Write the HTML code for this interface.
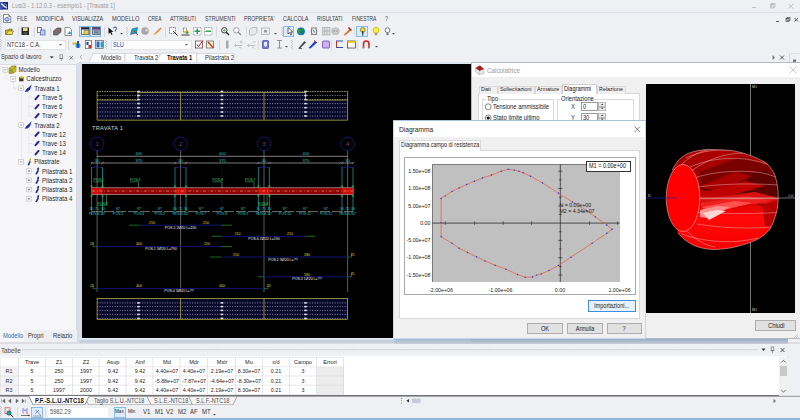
<!DOCTYPE html>
<html><head><meta charset="utf-8">
<style>
*{box-sizing:border-box;margin:0;padding:0}
html,body{width:800px;height:420px;overflow:hidden}
body{position:relative;background:#eff0f3;font-family:"Liberation Sans",sans-serif;font-size:5.8px;color:#1e1e1e}
.a{position:absolute}
.t{position:absolute;white-space:pre;line-height:1}
svg{position:absolute;overflow:visible}
</style></head><body>
<svg style="left:0;top:1.5px" width="9" height="9"><rect x="0" y="0" width="8" height="7.5" fill="#1c2480"/><rect x="0" y="0" width="3" height="7.5" fill="#4050b0"/><path d="M1.2 1.5 L6.8 6.2" stroke="#e8ecff" stroke-width="1.3"/><circle cx="4.8" cy="3.6" r="1.8" fill="none" stroke="#c8d0ff" stroke-width="0.6"/></svg>
<div class="t" style="left:12.00px;transform-origin:0 0;transform:scaleX(0.870);top:2.78px;font-size:6.67px;color:#9c9c9c;">Lusi3 - 1.12.0.3 - esempio1 - [Travata 1]</div>
<svg style="left:748px;top:2px" width="52" height="9"><path d="M4 5.5 H8" stroke="#aaa" stroke-width="0.7"/><rect x="22.5" y="2.5" width="3.5" height="3.5" fill="none" stroke="#aaa" stroke-width="0.6"/><rect x="23.5" y="1.5" width="3.5" height="3.5" fill="none" stroke="#aaa" stroke-width="0.6"/><path d="M40.5 2 L45 6.5 M45 2 L40.5 6.5" stroke="#aaa" stroke-width="0.7"/></svg>
<div class="a" style="left:0px;top:12px;width:800px;height:1px;background:#dedde5;"></div>
<svg style="left:3px;top:14px" width="9" height="10"><path d="M0.5 0.5 H5.5 L7.8 2.8 V8.5 H0.5Z" fill="#fafafa" stroke="#444" stroke-width="0.6"/><path d="M5.5 0.5 V2.8 H7.8" fill="#666"/><ellipse cx="4" cy="5.3" rx="2.6" ry="1.4" fill="none" stroke="#3a50d0" stroke-width="0.6"/><ellipse cx="4" cy="5.3" rx="1.2" ry="2.3" fill="none" stroke="#3a50d0" stroke-width="0.6"/></svg>
<svg style="left:0px;top:13.5px" width="3" height="11"><rect x="0.0" y="0.0" width="0.8" height="0.8" fill="#a8a8b4"/><rect x="1.2" y="1.2" width="0.8" height="0.8" fill="#a8a8b4"/><rect x="0.0" y="2.4" width="0.8" height="0.8" fill="#a8a8b4"/><rect x="1.2" y="3.5999999999999996" width="0.8" height="0.8" fill="#a8a8b4"/><rect x="0.0" y="4.8" width="0.8" height="0.8" fill="#a8a8b4"/><rect x="1.2" y="6.0" width="0.8" height="0.8" fill="#a8a8b4"/><rect x="0.0" y="7.199999999999999" width="0.8" height="0.8" fill="#a8a8b4"/><rect x="1.2" y="8.4" width="0.8" height="0.8" fill="#a8a8b4"/><rect x="0.0" y="9.6" width="0.8" height="0.8" fill="#a8a8b4"/></svg>
<div class="t" style="left:17.2px;top:15.6px;font-size:6.6px;color:#3a3a3a;transform-origin:0 0;transform:scaleX(0.732)">FILE</div>
<div class="t" style="left:36px;top:15.6px;font-size:6.6px;color:#3a3a3a;transform-origin:0 0;transform:scaleX(0.859)">MODIFICA</div>
<div class="t" style="left:72.4px;top:15.6px;font-size:6.6px;color:#3a3a3a;transform-origin:0 0;transform:scaleX(0.826)">VISUALIZZA</div>
<div class="t" style="left:112.2px;top:15.6px;font-size:6.6px;color:#3a3a3a;transform-origin:0 0;transform:scaleX(0.847)">MODELLO</div>
<div class="t" style="left:148.3px;top:15.6px;font-size:6.6px;color:#3a3a3a;transform-origin:0 0;transform:scaleX(0.736)">CREA</div>
<div class="t" style="left:170.2px;top:15.6px;font-size:6.6px;color:#3a3a3a;transform-origin:0 0;transform:scaleX(0.768)">ATTRIBUTI</div>
<div class="t" style="left:205.4px;top:15.6px;font-size:6.6px;color:#3a3a3a;transform-origin:0 0;transform:scaleX(0.795)">STRUMENTI</div>
<div class="t" style="left:243.8px;top:15.6px;font-size:6.6px;color:#3a3a3a;transform-origin:0 0;transform:scaleX(0.784)">PROPRIETA'</div>
<div class="t" style="left:282.8px;top:15.6px;font-size:6.6px;color:#3a3a3a;transform-origin:0 0;transform:scaleX(0.828)">CALCOLA</div>
<div class="t" style="left:316.8px;top:15.6px;font-size:6.6px;color:#3a3a3a;transform-origin:0 0;transform:scaleX(0.791)">RISULTATI</div>
<div class="t" style="left:352px;top:15.6px;font-size:6.6px;color:#3a3a3a;transform-origin:0 0;transform:scaleX(0.748)">FINESTRA</div>
<div class="t" style="left:385px;top:15.6px;font-size:6.6px;color:#3a3a3a;transform-origin:0 0;transform:scaleX(0.817)">?</div>
<svg style="left:774px;top:16px" width="26" height="8"><path d="M2 5.5 H5" stroke="#333" stroke-width="0.8"/><rect x="12" y="2.5" width="3" height="3" fill="none" stroke="#333" stroke-width="0.6"/><rect x="13" y="1.5" width="3" height="3" fill="none" stroke="#333" stroke-width="0.6"/><path d="M20.5 2 L24 5.5 M24 2 L20.5 5.5" stroke="#333" stroke-width="0.8"/></svg>
<svg style="left:0px;top:26px" width="3" height="11"><rect x="0.0" y="0.0" width="0.8" height="0.8" fill="#a8a8b4"/><rect x="1.2" y="1.2" width="0.8" height="0.8" fill="#a8a8b4"/><rect x="0.0" y="2.4" width="0.8" height="0.8" fill="#a8a8b4"/><rect x="1.2" y="3.5999999999999996" width="0.8" height="0.8" fill="#a8a8b4"/><rect x="0.0" y="4.8" width="0.8" height="0.8" fill="#a8a8b4"/><rect x="1.2" y="6.0" width="0.8" height="0.8" fill="#a8a8b4"/><rect x="0.0" y="7.199999999999999" width="0.8" height="0.8" fill="#a8a8b4"/><rect x="1.2" y="8.4" width="0.8" height="0.8" fill="#a8a8b4"/><rect x="0.0" y="9.6" width="0.8" height="0.8" fill="#a8a8b4"/></svg>
<svg style="left:0px;top:39px" width="3" height="11"><rect x="0.0" y="0.0" width="0.8" height="0.8" fill="#a8a8b4"/><rect x="1.2" y="1.2" width="0.8" height="0.8" fill="#a8a8b4"/><rect x="0.0" y="2.4" width="0.8" height="0.8" fill="#a8a8b4"/><rect x="1.2" y="3.5999999999999996" width="0.8" height="0.8" fill="#a8a8b4"/><rect x="0.0" y="4.8" width="0.8" height="0.8" fill="#a8a8b4"/><rect x="1.2" y="6.0" width="0.8" height="0.8" fill="#a8a8b4"/><rect x="0.0" y="7.199999999999999" width="0.8" height="0.8" fill="#a8a8b4"/><rect x="1.2" y="8.4" width="0.8" height="0.8" fill="#a8a8b4"/><rect x="0.0" y="9.6" width="0.8" height="0.8" fill="#a8a8b4"/></svg>
<svg style="left:5px;top:26.5px" width="10" height="10"><path d="M0.5 3 H3 L4 2 H7 V7.5 H0.5Z" fill="#c8b830" stroke="#5a5010" stroke-width="0.6"/><path d="M1.5 7.5 L3 4 H8.5 L7 7.5Z" fill="#f0e060" stroke="#5a5010" stroke-width="0.5"/></svg>
<svg style="left:21px;top:26.5px" width="10" height="10"><rect x="0.5" y="0.5" width="7.5" height="7.5" fill="#2a2a1a"/><rect x="2" y="1" width="4.5" height="3" fill="#e8e090"/><rect x="2.5" y="5.3" width="3.5" height="2.2" fill="#555"/></svg>
<svg style="left:37px;top:26.5px" width="10" height="10"><rect x="0.5" y="0.5" width="4" height="5" fill="#fff" stroke="#333" stroke-width="0.6"/><rect x="3.5" y="3" width="4.5" height="5" fill="#c0c8f0" stroke="#4050a0" stroke-width="0.6"/></svg>
<svg style="left:53px;top:26.5px" width="10" height="10"><path d="M0.5 4 L4 1 H8 V5 L4.5 8 H0.5Z" fill="#707070" stroke="#333" stroke-width="0.5"/><circle cx="4.5" cy="4.5" r="1" fill="#d04040"/></svg>
<svg style="left:64px;top:26.5px" width="10" height="10"><path d="M1 0.5 H5.5 L7.5 2.5 V8.5 H1Z" fill="#fff" stroke="#444" stroke-width="0.6"/><path d="M3 7 L6 4 L7.5 7Z" fill="#3aa0c0"/></svg>
<svg style="left:108px;top:26.5px" width="10" height="10"><path d="M0.5 0.5 L0.5 7 L2.2 5.4 L3.5 8 L4.5 7.5 L3.3 5 H5.5Z" fill="#111"/><path d="M5.5 1.5 Q5.5 0 7 0 Q8.6 0 8.6 1.5 Q8.6 2.6 7.2 3.3 V4.5" fill="none" stroke="#1a2a8a" stroke-width="0.9"/></svg>
<svg style="left:130px;top:26.5px" width="10" height="10"><path d="M0.5 7.5 L2 2 L7.5 0.5 L6.5 6Z" fill="#20a0c0" stroke="#105070" stroke-width="0.5"/><path d="M4 4 L8 8" stroke="#c03020" stroke-width="0.9"/></svg>
<svg style="left:141px;top:26.5px" width="10" height="10"><circle cx="4" cy="4" r="3.8" fill="#a8a8a8"/><circle cx="5.5" cy="3" r="1.5" fill="#d0d0d0"/></svg>
<svg style="left:153px;top:26.5px" width="10" height="10"><path d="M0.5 8 L2 6 L7.5 0.5 L8.5 1.5 L3 7Z" fill="#e08020"/><path d="M0.5 8 L2 6 L3 7Z" fill="#ffd040"/></svg>
<svg style="left:169px;top:26.5px" width="10" height="10"><rect x="0.5" y="0.5" width="6" height="6" fill="#fff" stroke="#222" stroke-width="0.6" stroke-dasharray="1 0.7"/><path d="M4 4 L8.5 8.5" stroke="#222" stroke-width="0.9"/></svg>
<svg style="left:181px;top:26.5px" width="10" height="10"><path d="M0.5 8 H8.5" stroke="#111" stroke-width="0.8"/><rect x="2.5" y="1" width="3" height="4" fill="#fff" stroke="#333" stroke-width="0.4"/><circle cx="5.5" cy="5" r="2" fill="#f0c020"/><circle cx="6.2" cy="5.5" r="1.2" fill="#30a040"/></svg>
<svg style="left:193px;top:26.5px" width="10" height="10"><rect x="0.5" y="0.5" width="7.5" height="7.5" fill="#fff" stroke="#555" stroke-width="0.5" stroke-dasharray="1 0.6"/><path d="M1.5 4.2 H7 M4.2 1.5 V7" stroke="#20a040" stroke-width="1.4"/></svg>
<svg style="left:204px;top:26.5px" width="10" height="10"><rect x="0.5" y="0.5" width="7.5" height="7.5" fill="#fff" stroke="#555" stroke-width="0.5" stroke-dasharray="1 0.6"/><path d="M1.5 4.2 H7" stroke="#20a040" stroke-width="1.4"/></svg>
<svg style="left:221px;top:26.5px" width="10" height="10"><circle cx="3.3" cy="3.3" r="2.7" fill="#fff" stroke="#222" stroke-width="0.9"/><path d="M5.2 5.2 L8 8" stroke="#222" stroke-width="1.3"/><path d="M2 3.3 H4.6 M3.3 2 V4.6" stroke="#1a8a30" stroke-width="0.6"/></svg>
<svg style="left:233px;top:26.5px" width="10" height="10"><circle cx="3.3" cy="3.3" r="2.7" fill="#fff" stroke="#888" stroke-width="0.8"/><path d="M5.2 5.2 L8 8" stroke="#888" stroke-width="1.1"/></svg>
<svg style="left:249px;top:26.5px" width="10" height="10"><path d="M0.5 3 L3 0.5 H8 V5.5 L5.5 8 H0.5Z" fill="#e8e8e8" stroke="#999" stroke-width="0.6"/></svg>
<svg style="left:261px;top:26.5px" width="10" height="10"><rect x="0.5" y="1" width="8" height="6.5" fill="#eee" stroke="#999" stroke-width="0.6"/><rect x="3" y="3" width="3" height="2.5" fill="#999"/></svg>
<svg style="left:285px;top:26.5px" width="10" height="10"><path d="M2 0.5 L2 7 L3.6 5.5 L4.8 8 L5.8 7.5 L4.6 5 H6.8Z" fill="#fff" stroke="#111" stroke-width="0.6"/></svg>
<svg style="left:297px;top:26.5px" width="10" height="10"><circle cx="4" cy="4.3" r="3.9" fill="#1a6ac0"/><path d="M1 2.5 Q3 1 4 3 Q3 6 5.5 7.5 Q2 8 1 5Z M5 1 Q7.5 2 7.5 4 Q6 4.5 5 3Z" fill="#20a030"/></svg>
<svg style="left:310px;top:26.5px" width="10" height="10"><path d="M1 1 H7 M1 7.5 H7" stroke="#666" stroke-width="0.8"/><path d="M2 1.5 Q0.5 4 2 7 M6 1.5 Q7.5 4 6 7" fill="none" stroke="#444" stroke-width="0.8"/><path d="M3.5 3 L4.5 5.5" stroke="#2a2a80" stroke-width="0.8"/></svg>
<svg style="left:322px;top:26.5px" width="10" height="10"><rect x="0.5" y="0.5" width="7.5" height="7.5" fill="#ddd" stroke="#999" stroke-width="0.5"/><path d="M2.5 0.5 V8 M5 0.5 V8 M0.5 4 H8" stroke="#999" stroke-width="0.5"/></svg>
<svg style="left:331px;top:26.5px" width="10" height="10"><ellipse cx="4.5" cy="4.2" rx="4" ry="3.5" fill="#ccc" stroke="#aaa" stroke-width="0.5"/><circle cx="3" cy="4" r="0.8" fill="#888"/><circle cx="6" cy="4" r="0.8" fill="#888"/></svg>
<svg style="left:343px;top:26.5px" width="10" height="10"><path d="M0.5 8 L6.5 2 L8 3.5 L2 8.5Z" fill="#e07020"/><path d="M5.5 0.5 L8.5 3.5" stroke="#c02020" stroke-width="1.5"/></svg>
<svg style="left:358px;top:26.5px" width="10" height="10"><circle cx="4.8" cy="3" r="2.4" fill="#f8e030" stroke="#333" stroke-width="0.5"/><path d="M4.8 4 V8.5" stroke="#222" stroke-width="1.1"/></svg>
<svg style="left:372px;top:26.5px" width="10" height="10"><circle cx="4" cy="3.2" r="3" fill="#f8f040" stroke="#a09000" stroke-width="0.5"/><rect x="2.8" y="6" width="2.4" height="2.2" fill="#999"/></svg>
<svg style="left:384px;top:26.5px" width="10" height="10"><circle cx="3.5" cy="3.2" r="2.4" fill="#fff" stroke="#444" stroke-width="0.7"/><rect x="2.5" y="5.6" width="2" height="2.5" fill="#777"/></svg>
<div class="a" style="left:79px;top:25.5px;width:11px;height:11.5px;background:#dcecfa;border:0.8px solid #88bde8"></div>
<div class="a" style="left:90px;top:25.5px;width:11px;height:11.5px;background:#dcecfa;border:0.8px solid #88bde8"></div>
<div class="a" style="left:283px;top:25.5px;width:11px;height:11.5px;background:#dcecfa;border:0.8px solid #88bde8"></div>
<div class="a" style="left:356px;top:25.5px;width:12px;height:11.5px;background:#dcecfa;border:0.8px solid #88bde8"></div>
<svg style="left:81px;top:27.0px" width="10" height="10"><rect x="0.5" y="0.5" width="7.5" height="7" fill="#fff" stroke="#223" stroke-width="0.6"/><rect x="0.5" y="0.5" width="7.5" height="2" fill="#223"/><rect x="3" y="3.5" width="4.5" height="4" fill="#e8d040" stroke="#333" stroke-width="0.4"/></svg>
<svg style="left:92px;top:27.0px" width="10" height="10"><rect x="0.5" y="0.5" width="7.5" height="7" fill="#b0b4d8" stroke="#334" stroke-width="0.6"/><rect x="0.5" y="0.5" width="7.5" height="2" fill="#5a3a6a"/><path d="M2 4 H6.5 M2 5.8 H6.5" stroke="#222" stroke-width="0.6"/></svg>
<svg style="left:286px;top:26.7px" width="10" height="10"><path d="M2 0.5 L2 7 L3.6 5.5 L4.8 8 L5.8 7.5 L4.6 5 H6.8Z" fill="#fff" stroke="#111" stroke-width="0.6"/></svg>
<svg style="left:358px;top:26.7px" width="10" height="10"><circle cx="4.8" cy="3" r="2.4" fill="#f8e030" stroke="#333" stroke-width="0.5"/><path d="M4.8 4 V8.5" stroke="#222" stroke-width="1.1"/></svg>
<div class="a" style="left:17.5px;top:26.5px;width:1px;height:10px;background:#d8d8de;"></div>
<div class="a" style="left:33.5px;top:26.5px;width:1px;height:10px;background:#d8d8de;"></div>
<div class="a" style="left:49.5px;top:26.5px;width:1px;height:10px;background:#d8d8de;"></div>
<div class="a" style="left:104px;top:26.5px;width:1px;height:10px;background:#d8d8de;"></div>
<div class="a" style="left:165px;top:26.5px;width:1px;height:10px;background:#d8d8de;"></div>
<div class="a" style="left:216px;top:26.5px;width:1px;height:10px;background:#d8d8de;"></div>
<div class="a" style="left:246px;top:26.5px;width:1px;height:10px;background:#d8d8de;"></div>
<div class="a" style="left:354px;top:26.5px;width:1px;height:10px;background:#d8d8de;"></div>
<svg style="left:126px;top:27px" width="3" height="10"><rect x="0.0" y="0.0" width="0.8" height="0.8" fill="#a8a8b4"/><rect x="1.2" y="1.2" width="0.8" height="0.8" fill="#a8a8b4"/><rect x="0.0" y="2.4" width="0.8" height="0.8" fill="#a8a8b4"/><rect x="1.2" y="3.5999999999999996" width="0.8" height="0.8" fill="#a8a8b4"/><rect x="0.0" y="4.8" width="0.8" height="0.8" fill="#a8a8b4"/><rect x="1.2" y="6.0" width="0.8" height="0.8" fill="#a8a8b4"/><rect x="0.0" y="7.199999999999999" width="0.8" height="0.8" fill="#a8a8b4"/><rect x="1.2" y="8.4" width="0.8" height="0.8" fill="#a8a8b4"/></svg>
<svg style="left:281px;top:27px" width="3" height="10"><rect x="0.0" y="0.0" width="0.8" height="0.8" fill="#a8a8b4"/><rect x="1.2" y="1.2" width="0.8" height="0.8" fill="#a8a8b4"/><rect x="0.0" y="2.4" width="0.8" height="0.8" fill="#a8a8b4"/><rect x="1.2" y="3.5999999999999996" width="0.8" height="0.8" fill="#a8a8b4"/><rect x="0.0" y="4.8" width="0.8" height="0.8" fill="#a8a8b4"/><rect x="1.2" y="6.0" width="0.8" height="0.8" fill="#a8a8b4"/><rect x="0.0" y="7.199999999999999" width="0.8" height="0.8" fill="#a8a8b4"/><rect x="1.2" y="8.4" width="0.8" height="0.8" fill="#a8a8b4"/></svg>
<svg style="left:120px;top:33px" width="4" height="3"><path d="M0 0 H3 L1.5 1.5Z" fill="#444"/></svg>
<svg style="left:274px;top:33px" width="4" height="3"><path d="M0 0 H3 L1.5 1.5Z" fill="#444"/></svg>
<svg style="left:392px;top:33px" width="4" height="3"><path d="M0 0 H3 L1.5 1.5Z" fill="#444"/></svg>
<div class="a" style="left:4.5px;top:39.5px;width:61px;height:10px;background:#fcfcfd;border:0.5px solid #e2e2e8"></div>
<div class="t" style="left:6.50px;transform-origin:0 0;transform:scaleX(0.870);top:41.80px;font-size:6.44px;color:#333;">NTC18 - C.A.</div>
<svg style="left:59px;top:43.5px" width="4" height="3"><path d="M0 0 H3 L1.5 1.5Z" fill="#555"/></svg>
<div class="a" style="left:110.5px;top:39.5px;width:81.5px;height:10px;background:#fcfcfd;border:0.5px solid #e2e2e8"></div>
<div class="t" style="left:113.00px;transform-origin:0 0;transform:scaleX(0.870);top:41.80px;font-size:6.44px;color:#3040b0;">SLU</div>
<svg style="left:185px;top:43.5px" width="4" height="3"><path d="M0 0 H3 L1.5 1.5Z" fill="#555"/></svg>
<svg style="left:72px;top:40.0px" width="10" height="10"><rect x="0.5" y="2.5" width="5" height="2" fill="#d0c020"/><circle cx="6" cy="5.5" r="2.5" fill="#20a0e0"/><rect x="5" y="1" width="2" height="7" fill="#3050c0"/></svg>
<svg style="left:85px;top:40.0px" width="10" height="10"><rect x="0.5" y="0.5" width="6" height="8" fill="#fff" stroke="#444" stroke-width="0.6"/><rect x="1.5" y="2" width="2" height="3" fill="#2040c0"/><rect x="3.5" y="5" width="2.5" height="3" fill="#c03030"/></svg>
<svg style="left:95px;top:40.0px" width="10" height="10"><rect x="0.5" y="0.5" width="8" height="8" fill="#fff" stroke="#444" stroke-width="0.6"/><rect x="1.5" y="1.5" width="3" height="6" fill="#3060c0"/><rect x="5.5" y="1.5" width="2.5" height="6" fill="#30a0b0"/></svg>
<svg style="left:195px;top:40.0px" width="10" height="10"><rect x="0.5" y="1" width="7" height="7" fill="#fff" stroke="#633" stroke-width="0.7"/><path d="M2 4.5 L3.5 6.5 L8 0.5" fill="none" stroke="#d02020" stroke-width="1"/></svg>
<svg style="left:206px;top:40.0px" width="10" height="10"><rect x="0.5" y="1" width="7" height="7" fill="#f8f0d0" stroke="#444" stroke-width="0.6"/><path d="M2 2 L7.5 8" stroke="#c03010" stroke-width="1.2"/></svg>
<svg style="left:225px;top:40.0px" width="10" height="10"><rect x="1" y="0.5" width="2.5" height="8" fill="#aaa"/></svg>
<svg style="left:234px;top:40.0px" width="10" height="10"><path d="M0.5 5.5 H8.5 M2 4 L0.5 5.5 L2 7 M5 7 Q7 7.5 7.5 8.5" fill="none" stroke="#aaa" stroke-width="0.7"/><path d="M5.5 2 H8.5 M7 0.5 V3.5" stroke="#aaa" stroke-width="0.6"/></svg>
<svg style="left:247px;top:40.0px" width="10" height="10"><path d="M0.5 5.5 H8.5 M2 4 L0.5 5.5 L2 7 M5 7 Q7 7.5 7.5 8.5" fill="none" stroke="#aaa" stroke-width="0.7"/><path d="M5.5 2 H8.5" stroke="#aaa" stroke-width="0.6"/></svg>
<svg style="left:262px;top:40.0px" width="10" height="10"><rect x="0.5" y="0.5" width="6" height="8" rx="0.8" fill="#7078d8" stroke="#303890" stroke-width="0.6"/><path d="M2 2 H5 V5.5 L3.5 7 L2 5.5Z" fill="#e8ecff"/></svg>
<svg style="left:276px;top:40.0px" width="10" height="10"><path d="M1 0.5 H6 M3.5 0.5 V8 M1 8 H6" stroke="#888" stroke-width="0.9"/></svg>
<svg style="left:298px;top:40.0px" width="10" height="10"><path d="M0.5 8 L6.5 1 L8 2.5 L2 8.5Z" fill="#4a4a4a"/><path d="M0.5 8.5 H4" stroke="#333" stroke-width="0.7"/></svg>
<svg style="left:308px;top:40.0px" width="10" height="10"><path d="M0.5 8 L7 1 L9 2.5 L2.5 8.5Z" fill="#2040d0"/><path d="M6 0.5 L9 3" stroke="#a02020" stroke-width="1"/></svg>
<svg style="left:322px;top:40.0px" width="10" height="10"><rect x="0.5" y="1" width="7" height="7" rx="1" fill="#d0b0f0" stroke="#6030a0" stroke-width="0.7"/></svg>
<svg style="left:335px;top:40.0px" width="10" height="10"><path d="M1 1 H8 M1 7.5 H8" stroke="#2050c0" stroke-width="1"/><path d="M1.5 1 V7.5" stroke="#d03020" stroke-width="1"/></svg>
<svg style="left:347px;top:40.0px" width="10" height="10"><rect x="0.5" y="1" width="8" height="7" fill="#fff" stroke="#333" stroke-width="0.7"/><rect x="0.5" y="1" width="8" height="2" fill="#e8c820"/></svg>
<svg style="left:362px;top:40.0px" width="10" height="10"><path d="M1.5 8 V4 Q1.5 1 4.2 1 Q7 1 7 4 V8" fill="none" stroke="#d82020" stroke-width="1.6"/><path d="M1.5 6.5 V8.5 M7 6.5 V8.5" stroke="#888" stroke-width="1.6"/></svg>
<div class="a" style="left:68px;top:39.5px;width:1px;height:10px;background:#d8d8de;"></div>
<div class="a" style="left:219px;top:39.5px;width:1px;height:10px;background:#d8d8de;"></div>
<div class="a" style="left:258px;top:39.5px;width:1px;height:10px;background:#d8d8de;"></div>
<div class="a" style="left:331px;top:39.5px;width:1px;height:10px;background:#d8d8de;"></div>
<div class="a" style="left:357px;top:39.5px;width:1px;height:10px;background:#d8d8de;"></div>
<svg style="left:105px;top:40px" width="3" height="10"><rect x="0.0" y="0.0" width="0.8" height="0.8" fill="#a8a8b4"/><rect x="1.2" y="1.2" width="0.8" height="0.8" fill="#a8a8b4"/><rect x="0.0" y="2.4" width="0.8" height="0.8" fill="#a8a8b4"/><rect x="1.2" y="3.5999999999999996" width="0.8" height="0.8" fill="#a8a8b4"/><rect x="0.0" y="4.8" width="0.8" height="0.8" fill="#a8a8b4"/><rect x="1.2" y="6.0" width="0.8" height="0.8" fill="#a8a8b4"/><rect x="0.0" y="7.199999999999999" width="0.8" height="0.8" fill="#a8a8b4"/><rect x="1.2" y="8.4" width="0.8" height="0.8" fill="#a8a8b4"/></svg>
<svg style="left:291px;top:40px" width="3" height="10"><rect x="0.0" y="0.0" width="0.8" height="0.8" fill="#a8a8b4"/><rect x="1.2" y="1.2" width="0.8" height="0.8" fill="#a8a8b4"/><rect x="0.0" y="2.4" width="0.8" height="0.8" fill="#a8a8b4"/><rect x="1.2" y="3.5999999999999996" width="0.8" height="0.8" fill="#a8a8b4"/><rect x="0.0" y="4.8" width="0.8" height="0.8" fill="#a8a8b4"/><rect x="1.2" y="6.0" width="0.8" height="0.8" fill="#a8a8b4"/><rect x="0.0" y="7.199999999999999" width="0.8" height="0.8" fill="#a8a8b4"/><rect x="1.2" y="8.4" width="0.8" height="0.8" fill="#a8a8b4"/></svg>
<svg style="left:285px;top:46px" width="4" height="3"><path d="M0 0 H3 L1.5 1.5Z" fill="#444"/></svg>
<svg style="left:375px;top:46px" width="4" height="3"><path d="M0 0 H3 L1.5 1.5Z" fill="#444"/></svg>
<div class="t" style="left:1px;top:54px;font-size:6.3px;color:#3a3a3a;transform-origin:0 0;transform:scaleX(0.9)">Spazio di lavoro</div>
<svg style="left:49px;top:54px" width="28" height="8"><path d="M0.8 2.3 H4.6 L2.7 4.5Z" fill="#444"/><rect x="11" y="0.8" width="2.6" height="3.6" fill="none" stroke="#666" stroke-width="0.6"/><path d="M10.3 4.4 H14.3 M12.3 4.4 V7" stroke="#666" stroke-width="0.6"/><path d="M20.5 2 L24 5.5 M24 2 L20.5 5.5" stroke="#555" stroke-width="0.7"/></svg>
<svg style="left:80px;top:52px" width="720" height="12"><path d="M2 3 L0 5 L2 7" fill="none" stroke="#999" stroke-width="0.7"/><path d="M9 10.5 L13 1.5 H45 V10.5" fill="#fbfbfd" stroke="#c4c4cc" stroke-width="0.6"/><path d="M45 10.5 V1.5 H80 V10.5" fill="#fbfbfd" stroke="#c4c4cc" stroke-width="0.6"/><path d="M76 11 L81 1 H117 V11" fill="#ffffff" stroke="#b8b8c4" stroke-width="0.6"/><path d="M117 10.5 V1.5 H154 V10.5" fill="#fbfbfd" stroke="#c4c4cc" stroke-width="0.6"/></svg>
<div class="t" style="left:101.00px;transform-origin:0 0;transform:scaleX(0.870);top:54.58px;font-size:6.67px;color:#333;">Modello</div>
<div class="t" style="left:133.70px;transform-origin:0 0;transform:scaleX(0.870);top:54.58px;font-size:6.67px;color:#333;">Travata 2</div>
<div class="t" style="left:166.50px;transform-origin:0 0;transform:scaleX(0.870);top:54.58px;font-size:6.67px;color:#111;font-weight:bold;">Travata 1</div>
<div class="t" style="left:204.50px;transform-origin:0 0;transform:scaleX(0.870);top:54.58px;font-size:6.67px;color:#333;">Pilastrata 2</div>
<svg style="left:788px;top:52px" width="12" height="11"><path d="M1.5 1.5 H12" stroke="#b8b8c0" stroke-width="0.6" stroke-dasharray="0.7 0.7"/><path d="M1.5 1 V11" stroke="#c8c8d0" stroke-width="0.6"/><rect x="5" y="7.5" width="3" height="2.5" fill="#777"/></svg>
<svg style="left:771px;top:54px" width="16" height="8"><path d="M1.5 1 L4 3.5 L1.5 6Z" fill="#777"/><path d="M9 1.5 L13 5.5 M13 1.5 L9 5.5" stroke="#333" stroke-width="0.8"/></svg>
<div class="a" style="left:79px;top:62px;width:394px;height:2px;background:#dfe6f0;"></div>
<div class="a" style="left:79px;top:62px;width:2.5px;height:276px;background:#d3dceb;"></div>
<div class="a" style="left:0px;top:63.5px;width:76.5px;height:267px;background:#f6f6f8;border-top:0.6px solid #dcdce2;border-right:0.8px solid #d8d9df;"></div>
<div class="a" style="left:76.5px;top:63px;width:3px;height:279px;background:#d9dfea;"></div>
<svg style="left:0;top:0" width="76" height="330"><path d="M5.3 72.3 V79.00999999999999 H11.3" fill="none" stroke="#c4c4c4" stroke-width="0.5" stroke-dasharray="0.7 0.7"/><path d="M13.5 81.50999999999999 V88.22 H19" fill="none" stroke="#c4c4c4" stroke-width="0.5" stroke-dasharray="0.7 0.7"/><path d="M21.4 90.72 V161.9" fill="none" stroke="#c4c4c4" stroke-width="0.5" stroke-dasharray="0.7 0.7"/><path d="M21.4 125.06 H19" fill="none" stroke="#c4c4c4" stroke-width="0.5" stroke-dasharray="0.7 0.7"/><path d="M21.4 161.9 H19" fill="none" stroke="#c4c4c4" stroke-width="0.5" stroke-dasharray="0.7 0.7"/><path d="M28.8 90.72 V115.85" fill="none" stroke="#c4c4c4" stroke-width="0.5" stroke-dasharray="0.7 0.7"/><path d="M28.8 97.43 H33.5" fill="none" stroke="#c4c4c4" stroke-width="0.5" stroke-dasharray="0.7 0.7"/><path d="M28.8 106.64 H33.5" fill="none" stroke="#c4c4c4" stroke-width="0.5" stroke-dasharray="0.7 0.7"/><path d="M28.8 115.85 H33.5" fill="none" stroke="#c4c4c4" stroke-width="0.5" stroke-dasharray="0.7 0.7"/><path d="M28.8 127.56 V152.69" fill="none" stroke="#c4c4c4" stroke-width="0.5" stroke-dasharray="0.7 0.7"/><path d="M28.8 134.26999999999998 H33.5" fill="none" stroke="#c4c4c4" stroke-width="0.5" stroke-dasharray="0.7 0.7"/><path d="M28.8 143.48000000000002 H33.5" fill="none" stroke="#c4c4c4" stroke-width="0.5" stroke-dasharray="0.7 0.7"/><path d="M28.8 152.69 H33.5" fill="none" stroke="#c4c4c4" stroke-width="0.5" stroke-dasharray="0.7 0.7"/><path d="M28.8 164.4 V198.74" fill="none" stroke="#c4c4c4" stroke-width="0.5" stroke-dasharray="0.7 0.7"/><rect x="3.0" y="67.5" width="4.6" height="4.6" fill="#fff" stroke="#b0b0b0" stroke-width="0.5"/><path d="M4.1 69.8 H6.5" stroke="#555" stroke-width="0.55"/><path d="M9 68.3 L12 66.0 H16 V71.3 L13 73.39999999999999 H9Z" fill="#c8c030" stroke="#6a6010" stroke-width="0.5"/><rect x="9.5" y="68.5" width="3.6" height="4.6" fill="#a0a020"/><path d="M13 68.5 L16 66.0" stroke="#6a6010" stroke-width="0.4"/><text transform="translate(18.5 72.25) scale(0.87 1)" font-size="7" fill="#2a2a2a">Modello</text><rect x="10.9" y="76.71" width="4.6" height="4.6" fill="#fff" stroke="#b0b0b0" stroke-width="0.5"/><path d="M12.0 79.00999999999999 H14.4" stroke="#555" stroke-width="0.55"/><rect x="19.2" y="77.00999999999999" width="4.3" height="4.3" fill="#3a3a18"/><rect x="19.8" y="76.41" width="3.5" height="2" fill="#c8c030"/><text transform="translate(26.35 81.46) scale(0.87 1)" font-size="7" fill="#2a2a2a">Calcestruzzo</text><rect x="18.8" y="85.92" width="4.6" height="4.6" fill="#fff" stroke="#b0b0b0" stroke-width="0.5"/><path d="M19.900000000000002 88.22 H22.3" stroke="#555" stroke-width="0.55"/><path d="M25.200000000000003 91.72 L27.700000000000003 88.22 L31.700000000000003 84.42 L30.200000000000003 89.22 L27.700000000000003 91.72Z" fill="#2030a8"/><path d="M25.200000000000003 91.72 L27.700000000000003 88.22" stroke="#101870" stroke-width="0.8"/><text transform="translate(34.2 90.67) scale(0.87 1)" font-size="7" fill="#2a2a2a">Travata 1</text><path d="M34.349999999999994 99.03 L37.849999999999994 94.93 Q39.349999999999994 94.13000000000001 39.65 95.83000000000001 L36.05 100.03 Q34.65 100.63000000000001 34.349999999999994 99.03Z" fill="#1a2098"/><text transform="translate(42.05 99.88000000000001) scale(0.87 1)" font-size="7" fill="#2a2a2a">Trave 5</text><path d="M34.349999999999994 108.24 L37.849999999999994 104.14 Q39.349999999999994 103.34 39.65 105.04 L36.05 109.24 Q34.65 109.84 34.349999999999994 108.24Z" fill="#1a2098"/><text transform="translate(42.05 109.09) scale(0.87 1)" font-size="7" fill="#2a2a2a">Trave 6</text><path d="M34.349999999999994 117.44999999999999 L37.849999999999994 113.35 Q39.349999999999994 112.55 39.65 114.25 L36.05 118.44999999999999 Q34.65 119.05 34.349999999999994 117.44999999999999Z" fill="#1a2098"/><text transform="translate(42.05 118.3) scale(0.87 1)" font-size="7" fill="#2a2a2a">Trave 7</text><rect x="18.8" y="122.76" width="4.6" height="4.6" fill="#fff" stroke="#b0b0b0" stroke-width="0.5"/><path d="M19.900000000000002 125.06 H22.3" stroke="#555" stroke-width="0.55"/><path d="M25.200000000000003 128.56 L27.700000000000003 125.06 L31.700000000000003 121.26 L30.200000000000003 126.06 L27.700000000000003 128.56Z" fill="#2030a8"/><path d="M25.200000000000003 128.56 L27.700000000000003 125.06" stroke="#101870" stroke-width="0.8"/><text transform="translate(34.2 127.51) scale(0.87 1)" font-size="7" fill="#2a2a2a">Travata 2</text><path d="M34.349999999999994 135.86999999999998 L37.849999999999994 131.76999999999998 Q39.349999999999994 130.96999999999997 39.65 132.67 L36.05 136.86999999999998 Q34.65 137.46999999999997 34.349999999999994 135.86999999999998Z" fill="#1a2098"/><text transform="translate(42.05 136.71999999999997) scale(0.87 1)" font-size="7" fill="#2a2a2a">Trave 12</text><path d="M34.349999999999994 145.08 L37.849999999999994 140.98000000000002 Q39.349999999999994 140.18 39.65 141.88000000000002 L36.05 146.08 Q34.65 146.68 34.349999999999994 145.08Z" fill="#1a2098"/><text transform="translate(42.05 145.93) scale(0.87 1)" font-size="7" fill="#2a2a2a">Trave 13</text><path d="M34.349999999999994 154.29 L37.849999999999994 150.19 Q39.349999999999994 149.39 39.65 151.09 L36.05 155.29 Q34.65 155.89 34.349999999999994 154.29Z" fill="#1a2098"/><text transform="translate(42.05 155.14) scale(0.87 1)" font-size="7" fill="#2a2a2a">Trave 14</text><rect x="18.8" y="159.6" width="4.6" height="4.6" fill="#fff" stroke="#b0b0b0" stroke-width="0.5"/><path d="M19.900000000000002 161.9 H22.3" stroke="#555" stroke-width="0.55"/><path d="M27.5 164.9 L29.5 160.9 L30.8 161.4 L29 165.4Z" fill="#2030a0"/><path d="M28.8 160.70000000000002 L30.2 158.1 L31 158.6 L30.3 161.3Z" fill="#a8b030"/><text transform="translate(34.2 164.35) scale(0.87 1)" font-size="7" fill="#2a2a2a">Pilastrate</text><rect x="26.700000000000003" y="168.81" width="4.6" height="4.6" fill="#fff" stroke="#b0b0b0" stroke-width="0.5"/><path d="M27.800000000000004 171.11 H30.200000000000003" stroke="#555" stroke-width="0.55"/><path d="M29.000000000000004 169.91000000000003 V172.31" stroke="#555" stroke-width="0.55"/><path d="M35.3 174.11 L37.5 170.11 L39 170.81 L36.8 174.71Z M36.8 169.61 L38 167.31 L39.2 167.91000000000003 L38.6 170.61Z" fill="#2030a0"/><text transform="translate(42.05 173.56) scale(0.87 1)" font-size="7" fill="#2a2a2a">Pilastrata 1</text><rect x="26.700000000000003" y="178.01999999999998" width="4.6" height="4.6" fill="#fff" stroke="#b0b0b0" stroke-width="0.5"/><path d="M27.800000000000004 180.32 H30.200000000000003" stroke="#555" stroke-width="0.55"/><path d="M29.000000000000004 179.12 V181.51999999999998" stroke="#555" stroke-width="0.55"/><path d="M35.3 183.32 L37.5 179.32 L39 180.01999999999998 L36.8 183.92Z M36.8 178.82 L38 176.51999999999998 L39.2 177.12 L38.6 179.82Z" fill="#2030a0"/><text transform="translate(42.05 182.76999999999998) scale(0.87 1)" font-size="7" fill="#2a2a2a">Pilastrata 2</text><rect x="26.700000000000003" y="187.23000000000002" width="4.6" height="4.6" fill="#fff" stroke="#b0b0b0" stroke-width="0.5"/><path d="M27.800000000000004 189.53000000000003 H30.200000000000003" stroke="#555" stroke-width="0.55"/><path d="M29.000000000000004 188.33000000000004 V190.73000000000002" stroke="#555" stroke-width="0.55"/><path d="M35.3 192.53000000000003 L37.5 188.53000000000003 L39 189.23000000000002 L36.8 193.13000000000002Z M36.8 188.03000000000003 L38 185.73000000000002 L39.2 186.33000000000004 L38.6 189.03000000000003Z" fill="#2030a0"/><text transform="translate(42.05 191.98000000000002) scale(0.87 1)" font-size="7" fill="#2a2a2a">Pilastrata 3</text><rect x="26.700000000000003" y="196.44" width="4.6" height="4.6" fill="#fff" stroke="#b0b0b0" stroke-width="0.5"/><path d="M27.800000000000004 198.74 H30.200000000000003" stroke="#555" stroke-width="0.55"/><path d="M29.000000000000004 197.54000000000002 V199.94" stroke="#555" stroke-width="0.55"/><path d="M35.3 201.74 L37.5 197.74 L39 198.44 L36.8 202.34Z M36.8 197.24 L38 194.94 L39.2 195.54000000000002 L38.6 198.24Z" fill="#2030a0"/><text transform="translate(42.05 201.19) scale(0.87 1)" font-size="7" fill="#2a2a2a">Pilastrata 4</text></svg>
<div class="a" style="left:0px;top:330px;width:76.5px;height:11.5px;background:#eeeff2;"></div>
<div class="a" style="left:0px;top:330px;width:24px;height:11.5px;background:#f6f6f8;"></div>
<div class="t" style="left:2.50px;transform-origin:0 0;transform:scaleX(0.870);top:332.58px;font-size:6.67px;color:#2a6ab0;">Modello</div>
<div class="t" style="left:27.80px;transform-origin:0 0;transform:scaleX(0.870);top:332.58px;font-size:6.67px;color:#333;">Propri</div>
<div class="t" style="left:52.80px;transform-origin:0 0;transform:scaleX(0.870);top:332.58px;font-size:6.67px;color:#333;">Relazio</div>
<div class="a" style="left:81.5px;top:64px;width:391.5px;height:274px;background:#000;"></div>
<svg style="left:0;top:0" width="800" height="420"><defs><clipPath id="cc"><rect x="81" y="64" width="392" height="274"/></clipPath></defs><g clip-path="url(#cc)" font-family="Liberation Sans" ><rect x="97.1" y="91.5" width="250.50000000000003" height="28.700000000000003" fill="#09092c"/><rect x="97.1" y="91.5" width="40.900000000000006" height="8.5" fill="#000"/><rect x="305.5" y="91.5" width="42.10000000000002" height="8.5" fill="#000"/><path d="M97.1 91.5 H347.6" stroke="#b0b0cc" stroke-width="0.7" stroke-dasharray="1.1 1.4"/><path d="M97.1 95.5 H347.6" stroke="#b0b0cc" stroke-width="0.7" stroke-dasharray="1.1 1.4"/><path d="M97.1 99.6 H347.6" stroke="#b0b0cc" stroke-width="0.7" stroke-dasharray="1.1 1.4"/><path d="M97.1 103.6 H347.6" stroke="#b0b0cc" stroke-width="0.7" stroke-dasharray="1.1 1.4"/><path d="M97.1 107.7 H347.6" stroke="#b0b0cc" stroke-width="0.7" stroke-dasharray="1.1 1.4"/><path d="M97.1 112.0 H347.6" stroke="#b0b0cc" stroke-width="0.7" stroke-dasharray="1.1 1.4"/><path d="M97.1 116.0 H347.6" stroke="#b0b0cc" stroke-width="0.7" stroke-dasharray="1.1 1.4"/><path d="M97.1 91.5 V120.2 H347.6 V91.5 M97.1 100 H138 V91.5 M305.5 91.5 V100 H347.6 M138 92.5 H305.5" fill="none" stroke="#c8c040" stroke-width="0.7"/><path d="M97.1 91.5 H138 M305.5 91.5 H347.6" stroke="#c8c040" stroke-width="0.6" stroke-dasharray="1.2 1.2"/><path d="M180.6 92.5 V120.2 M264.0 92.5 V120.2" stroke="#c8c040" stroke-width="0.7"/><rect x="137.2" y="90.7" width="2.6" height="1.6" fill="#e0e0e8"/><rect x="137.2" y="94.7" width="2.6" height="1.6" fill="#e0e0e8"/><rect x="137.2" y="98.8" width="2.6" height="1.6" fill="#e0e0e8"/><rect x="137.2" y="102.8" width="2.6" height="1.6" fill="#e0e0e8"/><rect x="137.2" y="106.9" width="2.6" height="1.6" fill="#e0e0e8"/><rect x="137.2" y="111.2" width="2.6" height="1.6" fill="#e0e0e8"/><rect x="137.2" y="115.2" width="2.6" height="1.6" fill="#e0e0e8"/><rect x="220.7" y="90.7" width="2.6" height="1.6" fill="#e0e0e8"/><rect x="220.7" y="94.7" width="2.6" height="1.6" fill="#e0e0e8"/><rect x="220.7" y="98.8" width="2.6" height="1.6" fill="#e0e0e8"/><rect x="220.7" y="102.8" width="2.6" height="1.6" fill="#e0e0e8"/><rect x="220.7" y="106.9" width="2.6" height="1.6" fill="#e0e0e8"/><rect x="220.7" y="111.2" width="2.6" height="1.6" fill="#e0e0e8"/><rect x="220.7" y="115.2" width="2.6" height="1.6" fill="#e0e0e8"/><rect x="304.2" y="90.7" width="2.6" height="1.6" fill="#e0e0e8"/><rect x="304.2" y="94.7" width="2.6" height="1.6" fill="#e0e0e8"/><rect x="304.2" y="98.8" width="2.6" height="1.6" fill="#e0e0e8"/><rect x="304.2" y="102.8" width="2.6" height="1.6" fill="#e0e0e8"/><rect x="304.2" y="106.9" width="2.6" height="1.6" fill="#e0e0e8"/><rect x="304.2" y="111.2" width="2.6" height="1.6" fill="#e0e0e8"/><rect x="304.2" y="115.2" width="2.6" height="1.6" fill="#e0e0e8"/><rect x="97.1" y="298.6" width="250.50000000000003" height="20.69999999999999" fill="#09092c"/><path d="M97.1 302.9 H347.6" stroke="#b0b0cc" stroke-width="0.7" stroke-dasharray="1.1 1.4"/><path d="M97.1 306.6 H347.6" stroke="#b0b0cc" stroke-width="0.7" stroke-dasharray="1.1 1.4"/><path d="M97.1 310.4 H347.6" stroke="#b0b0cc" stroke-width="0.7" stroke-dasharray="1.1 1.4"/><path d="M97.1 314.4 H347.6" stroke="#b0b0cc" stroke-width="0.7" stroke-dasharray="1.1 1.4"/><path d="M97.1 318.4 H347.6" stroke="#b0b0cc" stroke-width="0.7" stroke-dasharray="1.1 1.4"/><rect x="97.1" y="298.6" width="250.50000000000003" height="20.69999999999999" fill="none" stroke="#c8c040" stroke-width="0.7"/><path d="M180.6 298.6 V319.3 M264.0 298.6 V319.3" stroke="#c8c040" stroke-width="0.7"/><rect x="137.2" y="302.09999999999997" width="2.6" height="1.6" fill="#e0e0e8"/><rect x="137.2" y="305.8" width="2.6" height="1.6" fill="#e0e0e8"/><rect x="137.2" y="309.59999999999997" width="2.6" height="1.6" fill="#e0e0e8"/><rect x="137.2" y="313.59999999999997" width="2.6" height="1.6" fill="#e0e0e8"/><rect x="137.2" y="317.59999999999997" width="2.6" height="1.6" fill="#e0e0e8"/><rect x="220.7" y="302.09999999999997" width="2.6" height="1.6" fill="#e0e0e8"/><rect x="220.7" y="305.8" width="2.6" height="1.6" fill="#e0e0e8"/><rect x="220.7" y="309.59999999999997" width="2.6" height="1.6" fill="#e0e0e8"/><rect x="220.7" y="313.59999999999997" width="2.6" height="1.6" fill="#e0e0e8"/><rect x="220.7" y="317.59999999999997" width="2.6" height="1.6" fill="#e0e0e8"/><rect x="304.2" y="302.09999999999997" width="2.6" height="1.6" fill="#e0e0e8"/><rect x="304.2" y="305.8" width="2.6" height="1.6" fill="#e0e0e8"/><rect x="304.2" y="309.59999999999997" width="2.6" height="1.6" fill="#e0e0e8"/><rect x="304.2" y="313.59999999999997" width="2.6" height="1.6" fill="#e0e0e8"/><rect x="304.2" y="317.59999999999997" width="2.6" height="1.6" fill="#e0e0e8"/><text x="92" y="129.6" font-size="5.6" fill="#d8d8d8" letter-spacing="0.3">TRAVATA 1</text><path d="M97.1 150.8 V292" stroke="#a8a8a8" stroke-width="0.55"/><path d="M180.6 150.8 V292" stroke="#a8a8a8" stroke-width="0.55"/><path d="M264.0 150.8 V292" stroke="#a8a8a8" stroke-width="0.55"/><path d="M347.6 150.8 V292" stroke="#a8a8a8" stroke-width="0.55"/><circle cx="97.1" cy="143.8" r="6.8" fill="none" stroke="#1c1c90" stroke-width="0.8"/><text x="97.1" y="145.8" font-size="5" fill="#a030b0" text-anchor="middle">1</text><circle cx="180.6" cy="143.8" r="6.8" fill="none" stroke="#1c1c90" stroke-width="0.8"/><text x="180.6" y="145.8" font-size="5" fill="#a030b0" text-anchor="middle">2</text><circle cx="264.0" cy="143.8" r="6.8" fill="none" stroke="#1c1c90" stroke-width="0.8"/><text x="264.0" y="145.8" font-size="5" fill="#a030b0" text-anchor="middle">3</text><circle cx="347.6" cy="143.8" r="6.8" fill="none" stroke="#1c1c90" stroke-width="0.8"/><text x="347.6" y="145.8" font-size="5" fill="#a030b0" text-anchor="middle">4</text><path d="M97.1 156.3 H347.6" stroke="#d0d0d0" stroke-width="0.6"/><path d="M91 163 H353" stroke="#d0d0d0" stroke-width="0.6"/><path d="M90.39999999999999 164.2 L92.8 161.8" stroke="#d0d0d0" stroke-width="0.5"/><path d="M101.39999999999999 164.2 L103.8 161.8" stroke="#d0d0d0" stroke-width="0.5"/><text x="97.1" y="161.8" font-size="4" fill="#20c8c8" text-anchor="middle">30</text><path d="M173.9 164.2 L176.29999999999998 161.8" stroke="#d0d0d0" stroke-width="0.5"/><path d="M184.9 164.2 L187.29999999999998 161.8" stroke="#d0d0d0" stroke-width="0.5"/><text x="180.6" y="161.8" font-size="4" fill="#20c8c8" text-anchor="middle">30</text><path d="M257.3 164.2 L259.7 161.8" stroke="#d0d0d0" stroke-width="0.5"/><path d="M268.3 164.2 L270.7 161.8" stroke="#d0d0d0" stroke-width="0.5"/><text x="264.0" y="161.8" font-size="4" fill="#20c8c8" text-anchor="middle">30</text><path d="M340.90000000000003 164.2 L343.3 161.8" stroke="#d0d0d0" stroke-width="0.5"/><path d="M351.90000000000003 164.2 L354.3 161.8" stroke="#d0d0d0" stroke-width="0.5"/><text x="347.6" y="161.8" font-size="4" fill="#20c8c8" text-anchor="middle">30</text><text x="138.85" y="155.4" font-size="4" fill="#20c8c8" text-anchor="middle">400</text><text x="138.85" y="161.8" font-size="4" fill="#20c8c8" text-anchor="middle">370</text><text x="222.3" y="155.4" font-size="4" fill="#20c8c8" text-anchor="middle">400</text><text x="222.3" y="161.8" font-size="4" fill="#20c8c8" text-anchor="middle">370</text><text x="305.8" y="155.4" font-size="4" fill="#20c8c8" text-anchor="middle">400</text><text x="305.8" y="161.8" font-size="4" fill="#20c8c8" text-anchor="middle">370</text><path d="M91.5 167 V215 M102.5 167 V215" stroke="#20c8c8" stroke-width="0.6"/><path d="M91.5 168 Q97.1 165.5 102.5 168" fill="none" stroke="#2030a0" stroke-width="0.7"/><path d="M175.0 167 V215 M186.0 167 V215" stroke="#20c8c8" stroke-width="0.6"/><path d="M175.0 168 Q180.6 165.5 186.0 168" fill="none" stroke="#2030a0" stroke-width="0.7"/><path d="M258.4 167 V215 M269.4 167 V215" stroke="#20c8c8" stroke-width="0.6"/><path d="M258.4 168 Q264.0 165.5 269.4 168" fill="none" stroke="#2030a0" stroke-width="0.7"/><path d="M342.0 167 V215 M353.0 167 V215" stroke="#20c8c8" stroke-width="0.6"/><path d="M342.0 168 Q347.6 165.5 353.0 168" fill="none" stroke="#2030a0" stroke-width="0.7"/><rect x="92" y="187.8" width="261" height="6.5" fill="#8e0000" stroke="#e0b8b8" stroke-width="0.6"/><rect x="91.6" y="188.2" width="11" height="5.8" fill="#d01010"/><rect x="175.1" y="188.2" width="11" height="5.8" fill="#d01010"/><rect x="258.5" y="188.2" width="11" height="5.8" fill="#d01010"/><rect x="342.1" y="188.2" width="11" height="5.8" fill="#d01010"/><path d="M92 191 H353" stroke="#e89050" stroke-width="0.8" stroke-dasharray="3 1.8 0.8 1.8"/><circle cx="91.5" cy="186.3" r="0.9" fill="none" stroke="#40c040" stroke-width="0.5"/><circle cx="91.5" cy="196" r="0.9" fill="none" stroke="#40c040" stroke-width="0.5"/><circle cx="102.5" cy="186.3" r="0.9" fill="none" stroke="#40c040" stroke-width="0.5"/><circle cx="102.5" cy="196" r="0.9" fill="none" stroke="#40c040" stroke-width="0.5"/><circle cx="175.0" cy="186.3" r="0.9" fill="none" stroke="#40c040" stroke-width="0.5"/><circle cx="175.0" cy="196" r="0.9" fill="none" stroke="#40c040" stroke-width="0.5"/><circle cx="186.0" cy="186.3" r="0.9" fill="none" stroke="#40c040" stroke-width="0.5"/><circle cx="186.0" cy="196" r="0.9" fill="none" stroke="#40c040" stroke-width="0.5"/><circle cx="258.4" cy="186.3" r="0.9" fill="none" stroke="#40c040" stroke-width="0.5"/><circle cx="258.4" cy="196" r="0.9" fill="none" stroke="#40c040" stroke-width="0.5"/><circle cx="269.4" cy="186.3" r="0.9" fill="none" stroke="#40c040" stroke-width="0.5"/><circle cx="269.4" cy="196" r="0.9" fill="none" stroke="#40c040" stroke-width="0.5"/><circle cx="342.0" cy="186.3" r="0.9" fill="none" stroke="#40c040" stroke-width="0.5"/><circle cx="342.0" cy="196" r="0.9" fill="none" stroke="#40c040" stroke-width="0.5"/><circle cx="353.0" cy="186.3" r="0.9" fill="none" stroke="#40c040" stroke-width="0.5"/><circle cx="353.0" cy="196" r="0.9" fill="none" stroke="#40c040" stroke-width="0.5"/><text x="93.5" y="181" font-size="3.6" fill="#40d070">POS.1</text><path d="M93.5 181.8 H102.5 V188" fill="none" stroke="#40d070" stroke-width="0.5"/><text x="130" y="181" font-size="3.6" fill="#40d070">POS.6</text><path d="M130 181.8 H138.5 V188" fill="none" stroke="#40d070" stroke-width="0.5"/><text x="212.5" y="181" font-size="3.6" fill="#40d070">POS.8</text><path d="M212.5 181.8 H222 V188" fill="none" stroke="#40d070" stroke-width="0.5"/><text x="245" y="181" font-size="3.6" fill="#40d070">POS.7</text><path d="M245 181.8 H254 V188" fill="none" stroke="#40d070" stroke-width="0.5"/><text x="97.5" y="204.5" font-size="3.6" fill="#40d070">POS.6</text><path d="M97.5 205.3 H106.5 V195" fill="none" stroke="#40d070" stroke-width="0.5"/><text x="258" y="204.5" font-size="3.6" fill="#40d070">POS.6</text><path d="M258 205.3 H267 V195" fill="none" stroke="#40d070" stroke-width="0.5"/><path d="M222 170 V210" stroke="#999" stroke-width="0.4" stroke-dasharray="0.6 1.4"/><path d="M92 211.6 H353" stroke="#d8d8d8" stroke-width="0.5" stroke-dasharray="10 2"/><text x="91.5" y="210.3" font-size="3.4" fill="#20c8c8" text-anchor="middle">30</text><text x="97" y="210.3" font-size="3.4" fill="#20c8c8" text-anchor="middle">75</text><text x="103" y="210.3" font-size="3.4" fill="#20c8c8" text-anchor="middle">30</text><text x="118" y="210.3" font-size="3.4" fill="#20c8c8" text-anchor="middle">87</text><text x="139" y="210.3" font-size="3.4" fill="#20c8c8" text-anchor="middle">87</text><text x="160" y="210.3" font-size="3.4" fill="#20c8c8" text-anchor="middle">87</text><text x="175" y="210.3" font-size="3.4" fill="#20c8c8" text-anchor="middle">30</text><text x="180.6" y="210.3" font-size="3.4" fill="#20c8c8" text-anchor="middle">75</text><text x="186" y="210.3" font-size="3.4" fill="#20c8c8" text-anchor="middle">30</text><text x="201" y="210.3" font-size="3.4" fill="#20c8c8" text-anchor="middle">87</text><text x="222" y="210.3" font-size="3.4" fill="#20c8c8" text-anchor="middle">87</text><text x="243" y="210.3" font-size="3.4" fill="#20c8c8" text-anchor="middle">87</text><text x="258.5" y="210.3" font-size="3.4" fill="#20c8c8" text-anchor="middle">30</text><text x="264" y="210.3" font-size="3.4" fill="#20c8c8" text-anchor="middle">75</text><text x="269.5" y="210.3" font-size="3.4" fill="#20c8c8" text-anchor="middle">30</text><text x="285" y="210.3" font-size="3.4" fill="#20c8c8" text-anchor="middle">87</text><text x="305" y="210.3" font-size="3.4" fill="#20c8c8" text-anchor="middle">87</text><text x="326" y="210.3" font-size="3.4" fill="#20c8c8" text-anchor="middle">87</text><text x="342" y="210.3" font-size="3.4" fill="#20c8c8" text-anchor="middle">30</text><text x="347.6" y="210.3" font-size="3.4" fill="#20c8c8" text-anchor="middle">75</text><text x="353" y="210.3" font-size="3.4" fill="#20c8c8" text-anchor="middle">30</text><text x="97" y="215" font-size="3.5" fill="#20c8c8" text-anchor="middle">POS.6.1.7</text><text x="118" y="215" font-size="3.5" fill="#20c8c8" text-anchor="middle">POS.1</text><text x="139" y="215" font-size="3.5" fill="#20c8c8" text-anchor="middle">POS.4</text><text x="160" y="215" font-size="3.5" fill="#20c8c8" text-anchor="middle">POS.5</text><text x="180.6" y="215" font-size="3.5" fill="#20c8c8" text-anchor="middle">POS.6.1.7</text><text x="201" y="215" font-size="3.5" fill="#20c8c8" text-anchor="middle">POS.7</text><text x="222" y="215" font-size="3.5" fill="#20c8c8" text-anchor="middle">POS.8</text><text x="243" y="215" font-size="3.5" fill="#20c8c8" text-anchor="middle">POS.9</text><text x="264" y="215" font-size="3.5" fill="#20c8c8" text-anchor="middle">POS.6.1.7</text><text x="285" y="215" font-size="3.5" fill="#20c8c8" text-anchor="middle">POS.10</text><text x="305" y="215" font-size="3.5" fill="#20c8c8" text-anchor="middle">POS.11</text><text x="326" y="215" font-size="3.5" fill="#20c8c8" text-anchor="middle">POS.12</text><text x="347.6" y="215" font-size="3.5" fill="#20c8c8" text-anchor="middle">POS.6.1.7</text><path d="M129 225.2 H139.5" stroke="#187818" stroke-width="0.9"/><path d="M139.5 225.2 H221" stroke="#121278" stroke-width="1"/><path d="M221 225.2 H232" stroke="#187818" stroke-width="0.9"/><text x="152" y="223.89999999999998" font-size="3.6" fill="#e0d040" text-anchor="middle">210</text><text x="206" y="223.89999999999998" font-size="3.6" fill="#e0d040" text-anchor="middle">210</text><text x="180.6" y="228.79999999999998" font-size="3.6" fill="#f0f0f0" text-anchor="middle">POS.5 2Ø20 L=190</text><path d="M97 246.6 H221" stroke="#121278" stroke-width="1"/><path d="M221 246.6 H232" stroke="#187818" stroke-width="0.9"/><text x="139" y="245.29999999999998" font-size="3.6" fill="#e0d040" text-anchor="middle">400</text><text x="207" y="245.29999999999998" font-size="3.6" fill="#e0d040" text-anchor="middle">250</text><text x="161" y="250.2" font-size="3.6" fill="#f0f0f0" text-anchor="middle">POS.1 3Ø20 L=790</text><path d="M212 236.3 H222" stroke="#187818" stroke-width="0.9"/><path d="M222 236.3 H305" stroke="#121278" stroke-width="1"/><path d="M305 236.3 H315" stroke="#187818" stroke-width="0.9"/><text x="237.5" y="235.0" font-size="3.6" fill="#e0d040" text-anchor="middle">210</text><text x="290" y="235.0" font-size="3.6" fill="#e0d040" text-anchor="middle">210</text><text x="264" y="239.9" font-size="3.6" fill="#f0f0f0" text-anchor="middle">POS.6 2Ø20 L=190</text><path d="M210 257 H221" stroke="#187818" stroke-width="0.9"/><path d="M221 257 H347.6" stroke="#121278" stroke-width="1"/><text x="236" y="255.7" font-size="3.6" fill="#e0d040" text-anchor="middle">250</text><text x="307" y="255.7" font-size="3.6" fill="#e0d040" text-anchor="middle">180</text><text x="283" y="260.6" font-size="3.6" fill="#f0f0f0" text-anchor="middle">POS.2 3Ø20 L=??</text><path d="M258 276.8 H264" stroke="#187818" stroke-width="0.9"/><path d="M264 276.8 H347.6" stroke="#121278" stroke-width="1"/><text x="307" y="275.5" font-size="3.6" fill="#e0d040" text-anchor="middle">180</text><text x="307" y="280.40000000000003" font-size="3.6" fill="#f0f0f0" text-anchor="middle">POS.3 1Ø20 L=??</text><path d="M97 288.6 H264" stroke="#121278" stroke-width="1"/><text x="139" y="287.3" font-size="3.6" fill="#e0d040" text-anchor="middle">400</text><text x="222" y="287.3" font-size="3.6" fill="#e0d040" text-anchor="middle">400</text><text x="179" y="292.20000000000005" font-size="3.6" fill="#f0f0f0" text-anchor="middle">POS.4 3Ø20 L=??</text><path d="M97 246.6 H93 V242.6" fill="none" stroke="#30a030" stroke-width="0.6"/><text x="92" y="245.1" font-size="3.4" fill="#e0d040" text-anchor="middle">25</text><path d="M97 288.6 H93 V284.6" fill="none" stroke="#30a030" stroke-width="0.6"/><text x="92" y="287.1" font-size="3.4" fill="#e0d040" text-anchor="middle">25</text><path d="M347.6 257 H351.6 V253" fill="none" stroke="#30a030" stroke-width="0.6"/><text x="352.6" y="255.5" font-size="3.4" fill="#e0d040" text-anchor="middle">25</text><path d="M347.6 276.8 H351.6 V272.8" fill="none" stroke="#30a030" stroke-width="0.6"/><text x="352.6" y="275.3" font-size="3.4" fill="#e0d040" text-anchor="middle">25</text><path d="M264 288.6 H268 V284.6" fill="none" stroke="#30a030" stroke-width="0.6"/><text x="269" y="287.1" font-size="3.4" fill="#e0d040" text-anchor="middle">25</text></g></svg>
<div class="a" style="left:79px;top:338px;width:394px;height:1px;background:#c8d4e6;"></div>
<div class="a" style="left:0px;top:341.5px;width:800px;height:2.5px;background:#dcdce3;"></div>
<div class="a" style="left:79px;top:338.2px;width:709px;height:5.3px;background:linear-gradient(#e6f0fa 0,#e6f0fa 1.2px,#c4d4e6 1.8px,#c8cdda 4.3px,#cfd0da 5.3px);"></div>
<div class="a" style="left:393.5px;top:338px;width:394.5px;height:5.5px;background:linear-gradient(#86a4c4 0,#86a4c4 1px,#a9c0d8 1.6px,#bcc4d2 4.5px,#cbcdd8 5.5px);"></div>
<div class="a" style="left:471px;top:338px;width:317px;height:5.5px;background:linear-gradient(#6f8fb0 0,#6f8fb0 1px,#a0b6cc 1.6px,#b8c0cf 4.5px,#c8cad6 5.5px);"></div>
<div class="t" style="left:1.20px;transform-origin:0 0;transform:scaleX(0.870);top:346.54px;font-size:7.36px;color:#505050;letter-spacing:-0.1px;">Tabelle</div>
<svg style="left:22px;top:348px" width="736" height="4"><path d="M0 1.5 H736" stroke="#b4b4bc" stroke-width="0.8" stroke-dasharray="0.8 0.9"/><path d="M0.8 2.6 H736" stroke="#d0d0d6" stroke-width="0.6" stroke-dasharray="0.8 0.9"/></svg>
<svg style="left:760px;top:346px" width="28" height="9"><path d="M1.5 2.5 H5.5 L3.5 5Z" fill="#333"/><rect x="11.2" y="1" width="2.6" height="3.6" fill="none" stroke="#666" stroke-width="0.6"/><path d="M10.5 4.6 H14.5 M12.5 4.6 V7.2" stroke="#666" stroke-width="0.6"/><path d="M20.5 2 L24.5 6 M24.5 2 L20.5 6" stroke="#333" stroke-width="0.8"/></svg>
<div class="a" style="left:0px;top:356.3px;width:788px;height:39.5px;background:#ffffff;border-bottom:0.8px solid #777;border-right:0.6px solid #ccc;"></div>
<div class="a" style="left:0px;top:357.3px;width:343.5px;height:9.5px;background:#ffffff;"></div>
<div class="a" style="left:0px;top:366.8px;width:18.5px;height:27.69999999999999px;background:#f4f4f6;"></div>
<div class="a" style="left:316.5px;top:366.8px;width:27px;height:27.69999999999999px;background:#ececec;"></div>
<svg style="left:0;top:0" width="800" height="420"><path d="M0 357.3 V394.5" stroke="#d4d4d8" stroke-width="0.6"/><path d="M18.5 357.3 V394.5" stroke="#d4d4d8" stroke-width="0.6"/><path d="M45.5 357.3 V394.5" stroke="#d4d4d8" stroke-width="0.6"/><path d="M72.5 357.3 V394.5" stroke="#d4d4d8" stroke-width="0.6"/><path d="M99 357.3 V394.5" stroke="#d4d4d8" stroke-width="0.6"/><path d="M126 357.3 V394.5" stroke="#d4d4d8" stroke-width="0.6"/><path d="M153 357.3 V394.5" stroke="#d4d4d8" stroke-width="0.6"/><path d="M180 357.3 V394.5" stroke="#d4d4d8" stroke-width="0.6"/><path d="M207.5 357.3 V394.5" stroke="#d4d4d8" stroke-width="0.6"/><path d="M235.5 357.3 V394.5" stroke="#d4d4d8" stroke-width="0.6"/><path d="M262.5 357.3 V394.5" stroke="#d4d4d8" stroke-width="0.6"/><path d="M289.5 357.3 V394.5" stroke="#d4d4d8" stroke-width="0.6"/><path d="M316.5 357.3 V394.5" stroke="#d4d4d8" stroke-width="0.6"/><path d="M343.5 357.3 V394.5" stroke="#d4d4d8" stroke-width="0.6"/><path d="M0 357.3 H343.5" stroke="#dcdce0" stroke-width="0.6"/><path d="M0 366.8 H343.5" stroke="#dcdce0" stroke-width="0.6"/><path d="M0 376 H343.5" stroke="#dcdce0" stroke-width="0.6"/><path d="M0 385.2 H343.5" stroke="#dcdce0" stroke-width="0.6"/><path d="M0 394.5 H343.5" stroke="#dcdce0" stroke-width="0.6"/></svg>
<div class="t" style="left:12.0px;top:359.1px;width:40px;text-align:center;font-size:6.2px;color:#262626;transform:scaleX(0.9)">Trave</div>
<div class="t" style="left:39.0px;top:359.1px;width:40px;text-align:center;font-size:6.2px;color:#262626;transform:scaleX(0.9)">Z1</div>
<div class="t" style="left:65.75px;top:359.1px;width:40px;text-align:center;font-size:6.2px;color:#262626;transform:scaleX(0.9)">Z2</div>
<div class="t" style="left:92.5px;top:359.1px;width:40px;text-align:center;font-size:6.2px;color:#262626;transform:scaleX(0.9)">Asup</div>
<div class="t" style="left:119.5px;top:359.1px;width:40px;text-align:center;font-size:6.2px;color:#262626;transform:scaleX(0.9)">Ainf</div>
<div class="t" style="left:146.5px;top:359.1px;width:40px;text-align:center;font-size:6.2px;color:#262626;transform:scaleX(0.9)">Md</div>
<div class="t" style="left:173.75px;top:359.1px;width:40px;text-align:center;font-size:6.2px;color:#262626;transform:scaleX(0.9)">Mdr</div>
<div class="t" style="left:201.5px;top:359.1px;width:40px;text-align:center;font-size:6.2px;color:#262626;transform:scaleX(0.9)">Mslr</div>
<div class="t" style="left:229.0px;top:359.1px;width:40px;text-align:center;font-size:6.2px;color:#262626;transform:scaleX(0.9)">Mu</div>
<div class="t" style="left:256.0px;top:359.1px;width:40px;text-align:center;font-size:6.2px;color:#262626;transform:scaleX(0.9)">x/d</div>
<div class="t" style="left:283.0px;top:359.1px;width:40px;text-align:center;font-size:6.2px;color:#262626;transform:scaleX(0.9)">Campo</div>
<div class="t" style="left:310.0px;top:359.1px;width:40px;text-align:center;font-size:6.2px;color:#262626;transform:scaleX(0.9)">Errori</div>
<div class="t" style="left:-10.75px;top:368.3px;width:40px;text-align:center;font-size:6.2px;color:#262626;transform:scaleX(0.86)">R1</div>
<div class="t" style="left:12.0px;top:368.3px;width:40px;text-align:center;font-size:6.2px;color:#262626;transform:scaleX(0.86)">5</div>
<div class="t" style="left:39.0px;top:368.3px;width:40px;text-align:center;font-size:6.2px;color:#262626;transform:scaleX(0.86)">250</div>
<div class="t" style="left:65.75px;top:368.3px;width:40px;text-align:center;font-size:6.2px;color:#262626;transform:scaleX(0.86)">1997</div>
<div class="t" style="left:92.5px;top:368.3px;width:40px;text-align:center;font-size:6.2px;color:#262626;transform:scaleX(0.86)">9.42</div>
<div class="t" style="left:119.5px;top:368.3px;width:40px;text-align:center;font-size:6.2px;color:#262626;transform:scaleX(0.86)">9.42</div>
<div class="t" style="left:146.5px;top:368.3px;width:40px;text-align:center;font-size:6.2px;color:#262626;transform:scaleX(0.86)">4.40e+07</div>
<div class="t" style="left:173.75px;top:368.3px;width:40px;text-align:center;font-size:6.2px;color:#262626;transform:scaleX(0.86)">4.40e+07</div>
<div class="t" style="left:201.5px;top:368.3px;width:40px;text-align:center;font-size:6.2px;color:#262626;transform:scaleX(0.86)">2.19e+07</div>
<div class="t" style="left:229.0px;top:368.3px;width:40px;text-align:center;font-size:6.2px;color:#262626;transform:scaleX(0.86)">8.30e+07</div>
<div class="t" style="left:256.0px;top:368.3px;width:40px;text-align:center;font-size:6.2px;color:#262626;transform:scaleX(0.86)">0.21</div>
<div class="t" style="left:283.0px;top:368.3px;width:40px;text-align:center;font-size:6.2px;color:#262626;transform:scaleX(0.86)">3</div>
<div class="t" style="left:-10.75px;top:377.5px;width:40px;text-align:center;font-size:6.2px;color:#262626;transform:scaleX(0.86)">R2</div>
<div class="t" style="left:12.0px;top:377.5px;width:40px;text-align:center;font-size:6.2px;color:#262626;transform:scaleX(0.86)">5</div>
<div class="t" style="left:39.0px;top:377.5px;width:40px;text-align:center;font-size:6.2px;color:#262626;transform:scaleX(0.86)">250</div>
<div class="t" style="left:65.75px;top:377.5px;width:40px;text-align:center;font-size:6.2px;color:#262626;transform:scaleX(0.86)">1997</div>
<div class="t" style="left:92.5px;top:377.5px;width:40px;text-align:center;font-size:6.2px;color:#262626;transform:scaleX(0.86)">9.42</div>
<div class="t" style="left:119.5px;top:377.5px;width:40px;text-align:center;font-size:6.2px;color:#262626;transform:scaleX(0.86)">9.42</div>
<div class="t" style="left:146.5px;top:377.5px;width:40px;text-align:center;font-size:6.2px;color:#262626;transform:scaleX(0.86)">-5.88e+07</div>
<div class="t" style="left:173.75px;top:377.5px;width:40px;text-align:center;font-size:6.2px;color:#262626;transform:scaleX(0.86)">-7.87e+07</div>
<div class="t" style="left:201.5px;top:377.5px;width:40px;text-align:center;font-size:6.2px;color:#262626;transform:scaleX(0.86)">-4.64e+07</div>
<div class="t" style="left:229.0px;top:377.5px;width:40px;text-align:center;font-size:6.2px;color:#262626;transform:scaleX(0.86)">-8.30e+07</div>
<div class="t" style="left:256.0px;top:377.5px;width:40px;text-align:center;font-size:6.2px;color:#262626;transform:scaleX(0.86)">0.21</div>
<div class="t" style="left:283.0px;top:377.5px;width:40px;text-align:center;font-size:6.2px;color:#262626;transform:scaleX(0.86)">3</div>
<div class="t" style="left:-10.75px;top:386.7px;width:40px;text-align:center;font-size:6.2px;color:#262626;transform:scaleX(0.86)">R3</div>
<div class="t" style="left:12.0px;top:386.7px;width:40px;text-align:center;font-size:6.2px;color:#262626;transform:scaleX(0.86)">5</div>
<div class="t" style="left:39.0px;top:386.7px;width:40px;text-align:center;font-size:6.2px;color:#262626;transform:scaleX(0.86)">1997</div>
<div class="t" style="left:65.75px;top:386.7px;width:40px;text-align:center;font-size:6.2px;color:#262626;transform:scaleX(0.86)">2000</div>
<div class="t" style="left:92.5px;top:386.7px;width:40px;text-align:center;font-size:6.2px;color:#262626;transform:scaleX(0.86)">9.42</div>
<div class="t" style="left:119.5px;top:386.7px;width:40px;text-align:center;font-size:6.2px;color:#262626;transform:scaleX(0.86)">9.42</div>
<div class="t" style="left:146.5px;top:386.7px;width:40px;text-align:center;font-size:6.2px;color:#262626;transform:scaleX(0.86)">4.40e+07</div>
<div class="t" style="left:173.75px;top:386.7px;width:40px;text-align:center;font-size:6.2px;color:#262626;transform:scaleX(0.86)">4.40e+07</div>
<div class="t" style="left:201.5px;top:386.7px;width:40px;text-align:center;font-size:6.2px;color:#262626;transform:scaleX(0.86)">2.19e+07</div>
<div class="t" style="left:229.0px;top:386.7px;width:40px;text-align:center;font-size:6.2px;color:#262626;transform:scaleX(0.86)">8.30e+07</div>
<div class="t" style="left:256.0px;top:386.7px;width:40px;text-align:center;font-size:6.2px;color:#262626;transform:scaleX(0.86)">0.21</div>
<div class="t" style="left:283.0px;top:386.7px;width:40px;text-align:center;font-size:6.2px;color:#262626;transform:scaleX(0.86)">3</div>
<div class="a" style="left:779px;top:357px;width:9px;height:38.5px;background:#f0f0f0;"></div>
<div class="a" style="left:780px;top:366px;width:7px;height:9.5px;background:#c8c8c8;"></div>
<svg style="left:779px;top:357px" width="9" height="39"><path d="M2.3 5.5 L4.5 3.3 L6.7 5.5" fill="none" stroke="#333" stroke-width="0.7"/><path d="M2.3 33 L4.5 35.2 L6.7 33" fill="none" stroke="#333" stroke-width="0.7"/></svg>
<div class="a" style="left:0px;top:396px;width:800px;height:9px;background:#eff0f3;"></div>
<svg style="left:0;top:396px" width="260" height="10"><path d="M1.5 3 V7 M5 3 L2.5 5 L5 7Z M11 3 L8.5 5 L11 7Z M16 3 L18.5 5 L16 7Z M22 3 L24.5 5 L22 7Z M25.5 3 V7" fill="#666" stroke="#666" stroke-width="0.4"/><path d="M84.5 0.3 L88.5 8.8 H150 L154 0.3" fill="#f4f4f6" stroke="#666" stroke-width="0.5"/><path d="M147 0.3 L151 8.8 H191.5 L195.5 0.3" fill="#f4f4f6" stroke="#666" stroke-width="0.5"/><path d="M188.5 0.3 L192.5 8.8 H233 L237 0.3" fill="#f4f4f6" stroke="#666" stroke-width="0.5"/><path d="M0 0.3 H29 L33 8.8 H85 L89 0.3 H800" fill="#ffffff" stroke="#555" stroke-width="0.6"/></svg>
<div class="t" style="left:35.40px;transform-origin:0 0;transform:scaleX(0.870);top:397.97px;font-size:6.79px;color:#111;font-weight:bold;">P.F.-S.L.U.-NTC18</div>
<div class="t" style="left:94.00px;transform-origin:0 0;transform:scaleX(0.870);top:398.40px;font-size:6.32px;color:#505050;">Taglio S.L.U.-NTC18</div>
<div class="t" style="left:154.00px;transform-origin:0 0;transform:scaleX(0.870);top:398.40px;font-size:6.32px;color:#505050;">S.L.E.-NTC18</div>
<div class="t" style="left:196.00px;transform-origin:0 0;transform:scaleX(0.870);top:398.40px;font-size:6.32px;color:#505050;">S.L.F.-NTC18</div>
<svg style="left:400px;top:397px" width="22" height="8"><circle cx="1.4" cy="1.4" r="0.5" fill="#555"/><circle cx="1.4" cy="3.6" r="0.5" fill="#888"/><circle cx="1.4" cy="6" r="0.5" fill="#555"/><path d="M9 2 L6.3 3.8 L9 5.6Z" fill="#333"/><rect x="12" y="1.5" width="8.5" height="4.6" fill="#c8cad8"/></svg>
<svg style="left:772px;top:398px" width="6" height="6"><path d="M1.5 0.8 L4 3 L1.5 5.2Z" fill="#777"/></svg>
<div class="a" style="left:0px;top:405px;width:800px;height:13px;background:#eff0f3;"></div>
<svg style="left:0;top:406px" width="3" height="11"><rect x="0.0" y="0.0" width="0.8" height="0.8" fill="#a8a8b4"/><rect x="1.2" y="1.2" width="0.8" height="0.8" fill="#a8a8b4"/><rect x="0.0" y="2.4" width="0.8" height="0.8" fill="#a8a8b4"/><rect x="1.2" y="3.5999999999999996" width="0.8" height="0.8" fill="#a8a8b4"/><rect x="0.0" y="4.8" width="0.8" height="0.8" fill="#a8a8b4"/><rect x="1.2" y="6.0" width="0.8" height="0.8" fill="#a8a8b4"/><rect x="0.0" y="7.199999999999999" width="0.8" height="0.8" fill="#a8a8b4"/><rect x="1.2" y="8.4" width="0.8" height="0.8" fill="#a8a8b4"/><rect x="0.0" y="9.6" width="0.8" height="0.8" fill="#a8a8b4"/></svg>
<svg style="left:4px;top:407px" width="11" height="11"><rect x="1" y="0.8" width="5" height="6" fill="#f8e8e8" stroke="#b04040" stroke-width="0.6"/><circle cx="5" cy="6" r="2.2" fill="#20a0a0" stroke="#333" stroke-width="0.5"/><path d="M6.5 7.5 L9.3 10.2" stroke="#111" stroke-width="1"/></svg>
<div class="a" style="left:17px;top:406.5px;width:1px;height:10.5px;background:#d8d8de;"></div>
<svg style="left:20px;top:407px" width="11" height="11"><path d="M3 1.5 V6.5 M3 1.5 L5 4 L7 1.5 V6.5" fill="none" stroke="#7a8ae0" stroke-width="1"/><path d="M6 5 L8 7.5" stroke="#f08080" stroke-width="1"/><path d="M1 8.5 H9" stroke="#222" stroke-width="0.6"/><circle cx="9" cy="8.5" r="0.7" fill="#222"/></svg>
<div class="a" style="left:31px;top:407px;width:11.7px;height:11px;background:#dcecfa;border:0.8px solid #88bde8;"></div>
<svg style="left:31.5px;top:407.5px" width="11" height="11"><path d="M3.5 2 L7 5.5 M7 2 L3.5 5.5" stroke="#7a7ae0" stroke-width="0.9"/><path d="M7 5.5 L8.5 7.5" stroke="#e07070" stroke-width="0.9"/><path d="M1.5 8 H9.5" stroke="#222" stroke-width="0.6" stroke-dasharray="1 0.6"/></svg>
<div class="a" style="left:45px;top:406.5px;width:1px;height:10.5px;background:#d8d8de;"></div>
<div class="a" style="left:48px;top:407.5px;width:60px;height:9.5px;background:#ffffff;"></div>
<div class="t" style="left:50.00px;transform-origin:0 0;transform:scaleX(0.870);top:409.19px;font-size:6.55px;color:#555;">5982.29</div>
<div class="a" style="left:113.5px;top:406.5px;width:12px;height:11.5px;background:#dcecfa;border:0.8px solid #88bde8;"></div>
<div class="t" style="left:115.00px;transform-origin:0 0;transform:scaleX(0.870);top:409.47px;font-size:5.29px;color:#222;">Max</div>
<div class="t" style="left:127.50px;transform-origin:0 0;transform:scaleX(0.870);top:409.47px;font-size:5.29px;color:#222;">Min</div>
<div class="t" style="left:143.00px;transform-origin:0 0;transform:scaleX(0.870);top:409.17px;font-size:6.90px;color:#333;">V1</div>
<div class="t" style="left:155.00px;transform-origin:0 0;transform:scaleX(0.870);top:409.17px;font-size:6.90px;color:#333;">M1</div>
<div class="t" style="left:166.00px;transform-origin:0 0;transform:scaleX(0.870);top:409.17px;font-size:6.90px;color:#333;">V2</div>
<div class="t" style="left:178.00px;transform-origin:0 0;transform:scaleX(0.870);top:409.17px;font-size:6.90px;color:#333;">M2</div>
<div class="t" style="left:190.00px;transform-origin:0 0;transform:scaleX(0.870);top:409.17px;font-size:6.90px;color:#333;">AF</div>
<div class="t" style="left:202.00px;transform-origin:0 0;transform:scaleX(0.870);top:409.17px;font-size:6.90px;color:#333;">MT</div>
<svg style="left:213px;top:414px" width="4" height="3"><path d="M0 0 H3 L1.5 1.5Z" fill="#444"/></svg>
<div class="a" style="left:0px;top:418px;width:800px;height:2px;background:#8eb6dc;"></div>
<div class="a" style="left:471px;top:62px;width:330px;height:277px;background:#f0f0f0;border:1px solid #b4b8c4;"></div>
<div class="a" style="left:472px;top:63px;width:328px;height:14px;background:#ffffff;"></div>
<svg style="left:475px;top:65px" width="10" height="10"><path d="M0.5 3 L5 0.5 L9 4 L9 8.5 L4 9.5 L0.5 7Z" fill="#e8e8e8" stroke="#888" stroke-width="0.4"/><path d="M0.5 3 L5 0.5 L9 4 L4.5 6Z" fill="#a02020"/><path d="M4.5 6 L4 9.5" stroke="#999" stroke-width="0.4"/></svg>
<div class="t" style="left:487.00px;transform-origin:0 0;transform:scaleX(0.870);top:67.04px;font-size:7.24px;color:#9a9a9a;">Calcolatrice</div>
<svg style="left:789px;top:66px" width="9" height="9"><path d="M0.5 0.5 L7.5 7.5 M7.5 0.5 L0.5 7.5" stroke="#a8a8a8" stroke-width="0.6"/></svg>
<div class="a" style="left:478px;top:93px;width:162px;height:230px;background:#ffffff;border:0.5px solid #d8d8d8;"></div>
<div class="a" style="left:478.5px;top:85.5px;width:19.5px;height:8px;background:#f0f0f0;border:0.5px solid #d8d8d8;border-bottom:none;"></div>
<div class="t" style="left:480.70px;transform-origin:0 0;transform:scaleX(0.870);top:85.91px;font-size:6.21px;color:#222;">Dati</div>
<div class="a" style="left:498px;top:85.5px;width:37px;height:8px;background:#f0f0f0;border:0.5px solid #d8d8d8;border-bottom:none;"></div>
<div class="t" style="left:500.20px;transform-origin:0 0;transform:scaleX(0.870);top:85.91px;font-size:6.21px;color:#222;">Sollecitazioni</div>
<div class="a" style="left:535px;top:85.5px;width:27px;height:8px;background:#f0f0f0;border:0.5px solid #d8d8d8;border-bottom:none;"></div>
<div class="t" style="left:537.20px;transform-origin:0 0;transform:scaleX(0.870);top:85.91px;font-size:6.21px;color:#222;">Armature</div>
<div class="a" style="left:597px;top:85.5px;width:29px;height:8px;background:#f0f0f0;border:0.5px solid #d8d8d8;border-bottom:none;"></div>
<div class="t" style="left:599.20px;transform-origin:0 0;transform:scaleX(0.870);top:85.91px;font-size:6.21px;color:#222;">Relazione</div>
<div class="a" style="left:562px;top:84px;width:35px;height:10px;background:#ffffff;border:0.5px solid #d0d0d0;border-bottom:none;"></div>
<div class="t" style="left:564.20px;transform-origin:0 0;transform:scaleX(0.870);top:85.50px;font-size:6.44px;color:#111;">Diagrammi</div>
<div class="a" style="left:481.5px;top:98.5px;width:72px;height:60px;border:0.6px solid #dcdcdc;"></div>
<div class="a" style="left:486px;top:95.5px;width:12px;height:6px;background:#ffffff;"></div>
<div class="t" style="left:487.00px;transform-origin:0 0;transform:scaleX(0.870);top:95.88px;font-size:6.67px;color:#222;">Tipo</div>
<svg style="left:484px;top:103px" width="9" height="20"><circle cx="4.2" cy="3.8" r="3" fill="#fff" stroke="#333" stroke-width="0.6"/><circle cx="4.2" cy="15" r="3" fill="#fff" stroke="#333" stroke-width="0.6"/><circle cx="4.2" cy="15" r="1.6" fill="#111"/></svg>
<div class="t" style="left:492.80px;transform-origin:0 0;transform:scaleX(0.870);top:103.77px;font-size:6.79px;color:#222;">Tensione ammissibile</div>
<div class="t" style="left:492.80px;transform-origin:0 0;transform:scaleX(0.870);top:115.17px;font-size:6.79px;color:#222;">Stato limite ultimo</div>
<div class="a" style="left:556.5px;top:98.5px;width:77px;height:60px;border:0.6px solid #dcdcdc;"></div>
<div class="a" style="left:560px;top:95.5px;width:31px;height:6px;background:#ffffff;"></div>
<div class="t" style="left:561.00px;transform-origin:0 0;transform:scaleX(0.870);top:95.88px;font-size:6.67px;color:#222;">Orientazione</div>
<div class="t" style="left:570.50px;transform-origin:0 0;transform:scaleX(0.870);top:103.77px;font-size:6.90px;color:#333;">X</div>
<div class="t" style="left:570.50px;transform-origin:0 0;transform:scaleX(0.870);top:115.17px;font-size:6.90px;color:#333;">Y</div>
<div class="a" style="left:581px;top:102px;width:17px;height:9px;background:#ffffff;border:0.6px solid #9a9a9a;"></div>
<div class="a" style="left:581px;top:113px;width:17px;height:9px;background:#ffffff;border:0.6px solid #9a9a9a;"></div>
<div class="t" style="left:582.50px;transform-origin:0 0;transform:scaleX(0.870);top:103.60px;font-size:6.44px;color:#222;">0</div>
<div class="t" style="left:582.50px;transform-origin:0 0;transform:scaleX(0.870);top:114.60px;font-size:6.44px;color:#222;">30</div>
<div class="a" style="left:598px;top:102px;width:8px;height:4.5px;background:#e8e8e8;border:0.5px solid #bbb;"></div>
<div class="a" style="left:598px;top:106.5px;width:8px;height:4.5px;background:#e8e8e8;border:0.5px solid #bbb;"></div>
<svg style="left:600px;top:102px" width="5" height="9"><path d="M1 3 L2.2 1.7 L3.4 3Z M1 5.8 L2.2 7.1 L3.4 5.8Z" fill="#222"/></svg>
<div class="a" style="left:598px;top:113px;width:8px;height:4.5px;background:#e8e8e8;border:0.5px solid #bbb;"></div>
<div class="a" style="left:598px;top:117.5px;width:8px;height:4.5px;background:#e8e8e8;border:0.5px solid #bbb;"></div>
<svg style="left:600px;top:113px" width="5" height="9"><path d="M1 3 L2.2 1.7 L3.4 3Z M1 5.8 L2.2 7.1 L3.4 5.8Z" fill="#222"/></svg>
<div class="a" style="left:646px;top:84px;width:149px;height:229px;background:#000;"></div>
<svg style="left:0;top:0" width="800" height="420">
<defs>
<linearGradient id="bg1" x1="0" y1="0" x2="0" y2="1"><stop offset="0" stop-color="#b00000"/><stop offset="0.3" stop-color="#a00000"/><stop offset="0.5" stop-color="#d00000"/><stop offset="0.65" stop-color="#ff0808"/><stop offset="1" stop-color="#f40000"/></linearGradient>
<linearGradient id="bgR" x1="0" y1="0" x2="1" y2="0"><stop offset="0" stop-color="#000" stop-opacity="0"/><stop offset="0.6" stop-color="#000" stop-opacity="0.05"/><stop offset="1" stop-color="#000" stop-opacity="0.35"/></linearGradient>
<clipPath id="bc"><path d="M672.3 170.1 C676 162 681 157 687.4 153.7 C695 151 700 149.8 707.9 149.6 C716 149.6 724 149.8 731.2 150.4 C740 152 747 154 753 156.4 C759 159 763 161 766.7 163.3 C771 168 773 171 775 175.6 C777 182 778 188 778.2 194.7 C778.5 202 777.5 208 776.3 213 C774 220 772.5 225 770 229 C765 235 760 238 755 240.5 C747 244 738 246.5 730 248 C724 249 717 249.6 712 249.5 C705 249 699 247.5 694 245.5 C687 242 682 238 678 233 Z"/></clipPath>
</defs>
<path d="M750.5 84 V313" stroke="#c8c8c8" stroke-width="0.6"/>
<text x="752" y="88" font-size="3.5" fill="#ccc" font-family="Liberation Sans">M1</text>
<text x="752" y="311" font-size="3.5" fill="#ccc" font-family="Liberation Sans">M1</text>
<g clip-path="url(#bc)">
<rect x="660" y="145" width="125" height="110" fill="url(#bg1)"/>
<path d="M700 172 L740 157 L778 168 L778 215 L760 205 L730 196 L700 190Z" fill="#7a0000"/>
<path d="M725 180 L765 170 L778 180 L778 205 L750 198Z" fill="#5e0000"/>
<path d="M700 186 L735 172 L752 176 L718 192Z" fill="#a80000"/>
<path d="M700 194 L745 181 L765 186 L720 198Z" fill="#c00000"/>
<path d="M700 199 L755 192 L778 198 L778 204 L740 204 L702 207Z" fill="#d81010"/>
<path d="M700 203 L748 196 L772 201 L730 207 L703 211Z" fill="#f02020"/>
<path d="M702 207 L735 201 L752 203 L712 213Z" fill="#ff5050"/>
<path d="M700 210 L718 206 L730 207 L708 218 L700 217Z" fill="#ff9090"/>
<path d="M703 213 L717 210 L726 211 L709 220Z" fill="#ffd8d8"/>
<path d="M762 205 L778 200 L778 228 L765 226Z" fill="#b80000"/>
<g fill="none" stroke="#f4c0c0" stroke-width="0.45">
<path d="M686 158 C700 151 720 148 740 151 C752 153 760 157 766 161"/>
<path d="M690 167 C705 160 725 157 745 159 C758 161 766 163 773 167"/>
<path d="M694 178 C712 172 735 170 755 172 C765 173 770 175 776 177"/>
<path d="M698 187 C720 184 750 183 778 185"/>
<path d="M699.7 198.7 H778.2"/>
<path d="M680 166 C690 156 700 151 712 149"/>
<path d="M690 172 C705 160 725 153 745 153"/>
<path d="M686 230 C695 240 705 245 715 247"/>
<path d="M698 212.5 C720 214 750 214 778 212.5"/>
<path d="M697 224 C720 228 750 229 771 227"/>
<path d="M682 234 C700 241 730 245 758 238"/>

</g>
</g>
<path d="M672.3 170.1 C676 162 681 157 687.4 153.7 C695 151 700 149.8 707.9 149.6 C716 149.6 724 149.8 731.2 150.4 C740 152 747 154 753 156.4 C759 159 763 161 766.7 163.3 C771 168 773 171 775 175.6 C777 182 778 188 778.2 194.7 C778.5 202 777.5 208 776.3 213 C774 220 772.5 225 770 229 C765 235 760 238 755 240.5 C747 244 738 246.5 730 248 C724 249 717 249.6 712 249.5 C705 249 699 247.5 694 245.5 C687 242 682 238 678 233" fill="none" stroke="#f0d0d0" stroke-width="0.5"/>
<ellipse cx="683" cy="198" rx="16.8" ry="33.5" fill="#ff0000" stroke="#f4d0d0" stroke-width="0.5"/>
<path d="M646 198 H677" stroke="#2020a0" stroke-width="0.7"/>
<path d="M699.7 198 H795" stroke="#d8d8d8" stroke-width="0.5"/>
<text x="648" y="196.5" font-size="3.5" fill="#bbb" font-family="Liberation Sans">N</text>
<text x="788" y="196.5" font-size="3.5" fill="#bbb" font-family="Liberation Sans">Cal</text>
</svg>
<div class="a" style="left:754.5px;top:320px;width:41px;height:11px;background:#e1e1e1;border:0.6px solid #adadad;"></div>
<div class="t" style="left:767.50px;transform-origin:0 0;transform:scaleX(0.870);top:322.58px;font-size:6.67px;color:#222;">Chiudi</div>
<svg style="left:793px;top:333px" width="6" height="6"><path d="M5 1 L1 5 M5 3 L3 5" stroke="#999" stroke-width="0.5"/></svg>
<div class="a" style="left:393px;top:120px;width:253px;height:218.5px;background:#f0f0f0;border:1px solid #c4d8ee;border-top-color:#a6c4e2;"></div>
<div class="a" style="left:394px;top:121px;width:251px;height:16px;background:#ffffff;"></div>
<div class="t" style="left:398.50px;transform-origin:0 0;transform:scaleX(0.870);top:125.52px;font-size:7.59px;color:#222;">Diagramma</div>
<svg style="left:633.5px;top:125.8px" width="8" height="8"><path d="M0.5 0.5 L6 6 M6 0.5 L0.5 6" stroke="#333" stroke-width="0.6"/></svg>
<div class="a" style="left:398.5px;top:150.2px;width:241.5px;height:169px;background:#ffffff;border:0.6px solid #d9d9d9;"></div>
<div class="a" style="left:398.5px;top:140px;width:82px;height:11px;background:#ffffff;border:0.6px solid #d9d9d9;border-bottom:none;"></div>
<div class="t" style="left:400.50px;transform-origin:0 0;transform:scaleX(0.870);top:142.41px;font-size:6.27px;color:#222;">Diagramma campo di resistenza</div>
<div class="a" style="left:404px;top:156.5px;width:231.5px;height:138px;background:#ffffff;border:0.8px solid #a8a8a8;"></div>
<div class="a" style="left:432.3px;top:164.3px;width:187.5px;height:117.7px;background:#c0c0c0;border-top:0.8px solid #7a7a7a;border-left:0.8px solid #7a7a7a;"></div>
<svg style="left:0;top:0" width="800" height="420" font-family="Liberation Sans"><path d="M432.3 223.1 H619.8 M560.3 164.3 V282" stroke="#1a1a1a" stroke-width="0.7"/><path d="M558.0999999999999 171.20 H562.5" stroke="#222" stroke-width="0.6"/><path d="M558.9 179.85 H561.6999999999999" stroke="#222" stroke-width="0.6"/><path d="M558.0999999999999 188.50 H562.5" stroke="#222" stroke-width="0.6"/><path d="M558.9 197.15 H561.6999999999999" stroke="#222" stroke-width="0.6"/><path d="M558.0999999999999 205.80 H562.5" stroke="#222" stroke-width="0.6"/><path d="M558.9 214.45 H561.6999999999999" stroke="#222" stroke-width="0.6"/><path d="M558.9 231.75 H561.6999999999999" stroke="#222" stroke-width="0.6"/><path d="M558.0999999999999 240.40 H562.5" stroke="#222" stroke-width="0.6"/><path d="M558.9 249.05 H561.6999999999999" stroke="#222" stroke-width="0.6"/><path d="M558.0999999999999 257.70 H562.5" stroke="#222" stroke-width="0.6"/><path d="M558.9 266.35 H561.6999999999999" stroke="#222" stroke-width="0.6"/><path d="M558.0999999999999 275.00 H562.5" stroke="#222" stroke-width="0.6"/><path d="M445.3 221.29999999999998 V224.9" stroke="#222" stroke-width="0.6"/><path d="M474.6 221.29999999999998 V224.9" stroke="#222" stroke-width="0.6"/><path d="M503.2 221.29999999999998 V224.9" stroke="#222" stroke-width="0.6"/><path d="M531.6 221.29999999999998 V224.9" stroke="#222" stroke-width="0.6"/><path d="M589.5 221.29999999999998 V224.9" stroke="#222" stroke-width="0.6"/><path d="M617.6 221.29999999999998 V224.9" stroke="#222" stroke-width="0.6"/><text x="430.5" y="172.9" font-size="5.3" fill="#222" text-anchor="end">1.50e+08</text><text x="430.5" y="190.20000000000002" font-size="5.3" fill="#222" text-anchor="end">1.00e+08</text><text x="430.5" y="207.5" font-size="5.3" fill="#222" text-anchor="end">5.00e+07</text><text x="430.5" y="224.8" font-size="5.3" fill="#222" text-anchor="end">0.00</text><text x="430.5" y="242.1" font-size="5.3" fill="#222" text-anchor="end">-5.00e+07</text><text x="430.5" y="259.4" font-size="5.3" fill="#222" text-anchor="end">-1.00e+08</text><text x="430.5" y="276.7" font-size="5.3" fill="#222" text-anchor="end">-1.50e+08</text><text x="441" y="291.8" font-size="5.3" fill="#222" text-anchor="middle">-2.00e+06</text><text x="500.5" y="291.8" font-size="5.3" fill="#222" text-anchor="middle">-1.00e+06</text><text x="560" y="291.8" font-size="5.3" fill="#222" text-anchor="middle">0.00</text><text x="619.5" y="291.8" font-size="5.3" fill="#222" text-anchor="middle">1.00e+06</text><path d="M441.1 198.4 L445.2 195.9 L452 191.4 L459.1 187.9 L466.7 184.5 L474.4 181.2 L482.6 178 L491.5 175 L501.2 171.3 L508.2 169.3 L514.4 170.1 L519 171.3 L523.2 172.7 L530.6 176.3 L542.5 182.9 L558.5 193.3 L572.5 201.9 L586.7 210.5 L595.2 216.8 L606.8 225 L612.2 229.3 L606.8 233.2 L592.1 243.2 L570.9 257.2 L558.5 265.4 L548.8 270.6 L541.3 273.9 L536.7 275.1 L532.5 277 L525.2 277.3 L517.5 274.5 L505.9 269.2 L495 265.2 L485 261 L476.4 256.7 L467.6 252.5 L459.1 248.3 L452 243.2 L441.1 236.7 L441.1 222.8Z" fill="none" stroke="#e85a40" stroke-width="0.7"/><circle cx="441.1" cy="198.4" r="0.7" fill="#3030d0"/><circle cx="445.2" cy="195.9" r="0.7" fill="#3030d0"/><circle cx="452" cy="191.4" r="0.7" fill="#3030d0"/><circle cx="459.1" cy="187.9" r="0.7" fill="#3030d0"/><circle cx="466.7" cy="184.5" r="0.7" fill="#3030d0"/><circle cx="474.4" cy="181.2" r="0.7" fill="#3030d0"/><circle cx="482.6" cy="178" r="0.7" fill="#3030d0"/><circle cx="491.5" cy="175" r="0.7" fill="#3030d0"/><circle cx="501.2" cy="171.3" r="0.7" fill="#3030d0"/><circle cx="508.2" cy="169.3" r="0.7" fill="#3030d0"/><circle cx="514.4" cy="170.1" r="0.7" fill="#3030d0"/><circle cx="519" cy="171.3" r="0.7" fill="#3030d0"/><circle cx="523.2" cy="172.7" r="0.7" fill="#3030d0"/><circle cx="530.6" cy="176.3" r="0.7" fill="#3030d0"/><circle cx="542.5" cy="182.9" r="0.7" fill="#3030d0"/><circle cx="558.5" cy="193.3" r="0.7" fill="#3030d0"/><circle cx="572.5" cy="201.9" r="0.7" fill="#3030d0"/><circle cx="586.7" cy="210.5" r="0.7" fill="#3030d0"/><circle cx="595.2" cy="216.8" r="0.7" fill="#3030d0"/><circle cx="606.8" cy="225" r="0.7" fill="#3030d0"/><circle cx="612.2" cy="229.3" r="0.7" fill="#3030d0"/><circle cx="606.8" cy="233.2" r="0.7" fill="#3030d0"/><circle cx="592.1" cy="243.2" r="0.7" fill="#3030d0"/><circle cx="570.9" cy="257.2" r="0.7" fill="#3030d0"/><circle cx="558.5" cy="265.4" r="0.7" fill="#3030d0"/><circle cx="548.8" cy="270.6" r="0.7" fill="#3030d0"/><circle cx="541.3" cy="273.9" r="0.7" fill="#3030d0"/><circle cx="536.7" cy="275.1" r="0.7" fill="#3030d0"/><circle cx="532.5" cy="277" r="0.7" fill="#3030d0"/><circle cx="525.2" cy="277.3" r="0.7" fill="#3030d0"/><circle cx="517.5" cy="274.5" r="0.7" fill="#3030d0"/><circle cx="505.9" cy="269.2" r="0.7" fill="#3030d0"/><circle cx="495" cy="265.2" r="0.7" fill="#3030d0"/><circle cx="485" cy="261" r="0.7" fill="#3030d0"/><circle cx="476.4" cy="256.7" r="0.7" fill="#3030d0"/><circle cx="467.6" cy="252.5" r="0.7" fill="#3030d0"/><circle cx="459.1" cy="248.3" r="0.7" fill="#3030d0"/><circle cx="452" cy="243.2" r="0.7" fill="#3030d0"/><circle cx="441.1" cy="236.7" r="0.7" fill="#3030d0"/><circle cx="441.1" cy="222.8" r="0.7" fill="#3030d0"/><text x="559.5" y="207" font-size="5.8" fill="#222" transform="translate(559.5 0) scale(0.9 1) translate(-559.5 0)">N = 0.00e+00</text><text x="559.5" y="213.2" font-size="5.8" fill="#222" transform="translate(559.5 0) scale(0.9 1) translate(-559.5 0)">M2 = 4.34e+07</text></svg>
<div class="a" style="left:586px;top:160.7px;width:44.7px;height:11.3px;background:#ffffff;border:0.7px solid #333;"></div>
<div class="t" style="left:589.00px;transform-origin:0 0;transform:scaleX(0.870);top:163.40px;font-size:6.32px;color:#111;">M1 = 0.00e+00</div>
<div class="a" style="left:588px;top:300px;width:48px;height:11.6px;background:#e5f1fb;border:1px solid #3c8ee0;"></div>
<div class="t" style="left:594.00px;transform-origin:0 0;transform:scaleX(0.870);top:302.80px;font-size:6.44px;color:#222;">Importazioni...</div>
<div class="a" style="left:527.3px;top:323.3px;width:35.30000000000007px;height:11px;background:#e1e1e1;border:0.6px solid #adadad;"></div>
<div class="t" style="left:484.95px;width:120px;text-align:center;transform-origin:50% 0;transform:scaleX(0.870);top:325.90px;font-size:6.44px;color:#222;">OK</div>
<div class="a" style="left:566.8px;top:323.3px;width:35.80000000000007px;height:11px;background:#e1e1e1;border:0.6px solid #adadad;"></div>
<div class="t" style="left:524.70px;width:120px;text-align:center;transform-origin:50% 0;transform:scaleX(0.870);top:325.90px;font-size:6.44px;color:#222;">Annulla</div>
<div class="a" style="left:606.5px;top:323.3px;width:35.799999999999955px;height:11px;background:#e1e1e1;border:0.6px solid #adadad;"></div>
<div class="t" style="left:564.40px;width:120px;text-align:center;transform-origin:50% 0;transform:scaleX(0.870);top:325.90px;font-size:6.44px;color:#222;">?</div>
</body></html>
